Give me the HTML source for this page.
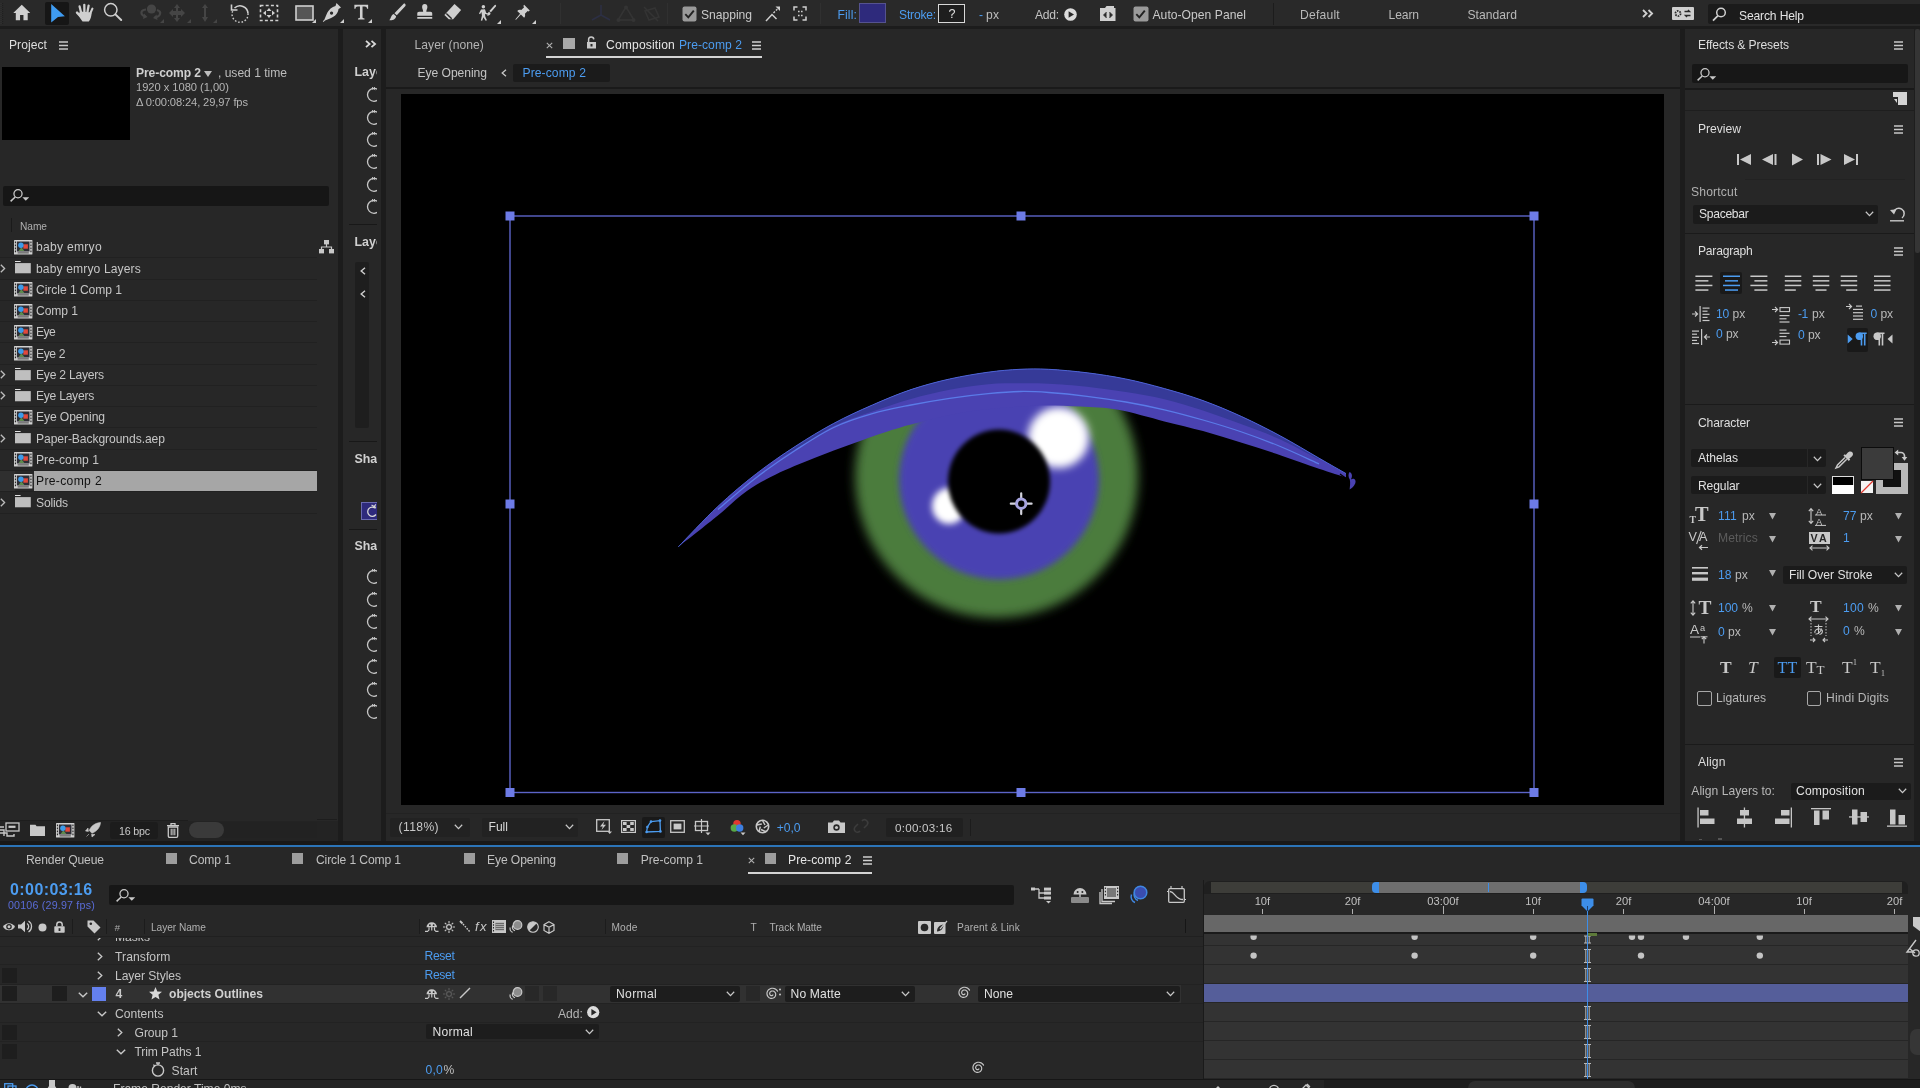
<!DOCTYPE html>
<html><head><meta charset="utf-8"><title>After Effects</title>
<style>
html,body{margin:0;padding:0;}
body{width:1920px;height:1088px;overflow:hidden;background:#1c1c1c;font-family:"Liberation Sans",sans-serif;position:relative;}
#r{position:absolute;left:0;top:0;width:1920px;height:1088px;overflow:hidden;will-change:transform;}
#r div,#r span,#r svg{position:absolute;display:block;white-space:nowrap;}
#r svg{overflow:visible;}
</style></head><body><div id="r">
<div style="left:0px;top:0px;width:1920px;height:25.7px;background:#292929;"></div>
<div style="left:0px;top:25.7px;width:1920px;height:3.5px;background:#1c1c1c;"></div>
<svg style="left:0px;top:3px;" width="3" height="21" viewBox="0 0 3 21"><path d="M1 0 V21" stroke="#343434" stroke-width="1" stroke-dasharray="1 1"/><path d="M2.6 0 V21" stroke="#1e1e1e" stroke-width="1" stroke-dasharray="1 1"/></svg>
<div style="left:45px;top:1.5px;width:24px;height:23.5px;background:#161616;border-radius:2px;"></div>
<svg style="left:11.5px;top:4.4px;" width="19.5" height="17" viewBox="0 0 22 20"><path d="M11 1 L1 10.5 H4 V19 H9 V13 H13 V19 H18 V10.5 H21 Z" fill="#cfcfcf"/></svg>
<svg style="left:0px;top:0px;" width="70" height="28" viewBox="0 0 70 28"><path d="M51.2 4 L64.9 16.3 L58 17 L51.2 22.6 Z" fill="#3f9cf2"/></svg>
<svg style="left:75px;top:2.5px;" width="20" height="20" viewBox="0 0 20 20"><g fill="none" stroke="#cfcfcf" stroke-linecap="round"><path d="M6.2 10 L4.6 3.4" stroke-width="2.3"/><path d="M9.4 9 L9.3 1.8" stroke-width="2.3"/><path d="M12.4 9.4 L13.6 2.6" stroke-width="2.3"/><path d="M15 11 L17.4 5.6" stroke-width="2.1"/><path d="M5.6 13.4 L2 9.6" stroke-width="2.4"/></g><path d="M5 8.5 L16.6 9.5 C16.6 13 15.6 16.4 13.8 18.6 H7.6 C6 16.8 4.6 14.6 3.4 12 Z" fill="#cfcfcf"/></svg>
<svg style="left:102px;top:1px;" width="22" height="22" viewBox="0 0 22 22"><circle cx="8.8" cy="8.8" r="6.2" fill="none" stroke="#cfcfcf" stroke-width="1.5"/><path d="M13.4 13.4 L19.2 19" stroke="#cfcfcf" stroke-width="2" stroke-linecap="round"/></svg>
<svg style="left:138px;top:3px;" width="24" height="20" viewBox="0 0 24 20"><circle cx="13.5" cy="6" r="4.6" fill="#454545"/><path d="M8 6.5 C2 7 2 12 7.5 13.5 M19 7 C24 8.5 23 13.5 16.5 14.5" fill="none" stroke="#454545" stroke-width="2.2"/><path d="M6 10.5 L9.5 14 L5 16Z M18.5 11.5 L15 15 L19.5 17Z" fill="#454545"/></svg>
<svg style="left:168px;top:4.2px;" width="18" height="18" viewBox="0 0 18 18"><path d="M9 0 l3 4 h-2 v3 h3 v-2 l4 4 l-4 4 v-2 h-3 v3 h2 l-3 4 l-3 -4 h2 v-3 h-3 v2 l-4 -4 l4 -4 v2 h3 v-3 h-2z" fill="#454545"/></svg>
<svg style="left:200px;top:4.2px;" width="10" height="18" viewBox="0 0 10 18"><path d="M5 0 l3 4 h-2 v9 h2 l-3 5 l-3 -5 h2 v-9 h-2z" fill="#454545"/></svg>
<svg style="left:160px;top:19.2px;" width="4" height="4" viewBox="0 0 4 4"><path d="M4 0V4H0Z" fill="#454545"/></svg>
<svg style="left:187px;top:19.2px;" width="4" height="4" viewBox="0 0 4 4"><path d="M4 0V4H0Z" fill="#454545"/></svg>
<svg style="left:213px;top:19.2px;" width="4" height="4" viewBox="0 0 4 4"><path d="M4 0V4H0Z" fill="#454545"/></svg>
<svg style="left:230px;top:2.2px;" width="20" height="21" viewBox="0 0 20 21"><path d="M4.5 6 A8 8 0 0 1 18 11.5" fill="none" stroke="#cfcfcf" stroke-width="1.6"/><path d="M18 11.5 A8 8 0 1 1 3 8.5" fill="none" stroke="#cfcfcf" stroke-width="1.4" stroke-dasharray="1.6 1.8"/><path d="M1.5 2.5 V8 H7.5" fill="none" stroke="#cfcfcf" stroke-width="1.6"/></svg>
<svg style="left:259px;top:3.2px;" width="20" height="20" viewBox="0 0 20 20"><rect x="1.5" y="2.5" width="17" height="15" fill="none" stroke="#cfcfcf" stroke-width="1.6" stroke-dasharray="3 2.2"/><path d="M10 5 l2.5 3 h-5z M10 15 l2.5 -3 h-5z M4 10 l3 -2.5 v5z M16 10 l-3 -2.5 v5z" fill="#cfcfcf"/></svg>
<svg style="left:295px;top:4.5px;" width="19" height="17" viewBox="0 0 19 17"><rect x="1" y="1" width="17" height="14" fill="#555" stroke="#cfcfcf" stroke-width="1.6"/></svg>
<svg style="left:312px;top:19.2px;" width="4" height="4" viewBox="0 0 4 4"><path d="M4 0V4H0Z" fill="#cfcfcf"/></svg>
<svg style="left:322px;top:2.2px;" width="20" height="21" viewBox="0 0 20 21"><path d="M14.5 1 L19 5.5 L16.5 7 C16 11 14 14 8 16.5 L3 18.5 L1.5 20 L.8 19.3 L2.3 17.8 L4.5 12.5 C7 7 10 5 13.5 4 Z M9.5 9.5 a1.6 1.6 0 1 0 .1 0z" fill="#cfcfcf" fill-rule="evenodd"/></svg>
<svg style="left:340px;top:19.2px;" width="4" height="4" viewBox="0 0 4 4"><path d="M4 0V4H0Z" fill="#cfcfcf"/></svg>
<svg style="left:352.5px;top:4.4px;" width="16.5" height="15.5" viewBox="0 0 17 18"><path d="M.5 1 H16.5 V5.5 H15.2 C15 3.6 14.3 2.8 12.5 2.8 H10 V15 C10 16.3 10.6 16.6 12.3 16.7 V18 H4.7 V16.7 C6.4 16.6 7 16.3 7 15 V2.8 H4.5 C2.7 2.8 2 3.6 1.8 5.5 H.5 Z" fill="#cfcfcf"/></svg>
<svg style="left:368px;top:19.2px;" width="4" height="4" viewBox="0 0 4 4"><path d="M4 0V4H0Z" fill="#cfcfcf"/></svg>
<svg style="left:387.5px;top:3.0px;" width="18.5" height="18.5" viewBox="0 0 20 21"><path d="M19 1 C20 2 19.5 3 19 3.7 L9.5 14 L6.8 11.5 L17 1.2 C17.7 .5 18.5 .5 19 1 Z M6 12.5 L8.7 15 C8.5 18 5 20 1 19.5 C3 18 2.5 14 6 12.5 Z" fill="#cfcfcf"/></svg>
<svg style="left:415px;top:3.2px;" width="19.5" height="18.5" viewBox="0 0 19 21"><path d="M6.5 4.5 a3 3.5 0 1 1 6 0 c0 2 -1.2 3 -1.2 5.5 H16 c1.3 0 2 .8 2 2 V14.5 H1 V12 c0-1.2 .7-2 2-2 H7.7 C7.7 7.5 6.5 6.5 6.5 4.5 Z M1 16 H18 V18 H1 Z" fill="#cfcfcf"/></svg>
<svg style="left:443px;top:3.2px;" width="19.5" height="18.5" viewBox="0 0 21 21"><path d="M12.5 1 L20 8 L11 18.5 H6 L1 13.5 Z" fill="#cfcfcf"/><path d="M3.2 12 L9.3 17.8" stroke="#292929" stroke-width="1.6"/></svg>
<svg style="left:477.5px;top:3.8px;" width="19.5" height="17.5" viewBox="0 0 23 22"><circle cx="6" cy="3.4" r="2.2" fill="#cfcfcf"/><path d="M3 7 L8 6.5 L9.5 11 L12.5 12 L12 13.5 L8 12.5 L8.5 16 L10.5 20.5 L8.8 21 L6 16.5 L4.5 21 L2.8 20.6 L4.2 14.5 L3.6 10 L1.8 12.8 L.5 12 Z" fill="#cfcfcf"/><path d="M21.5 1.2 C22.4 2 22 3 21.4 3.6 L15.5 10.5 L13.5 8.8 L20 1.6 C20.5 1 21 .8 21.5 1.2 Z M13 9.6 L15 11.3 C15 13.5 13 15 10.5 14.8 C12 13.8 11.2 10.6 13 9.6 Z" fill="#cfcfcf"/></svg>
<svg style="left:497px;top:19.7px;" width="4" height="4" viewBox="0 0 4 4"><path d="M4 0V4H0Z" fill="#cfcfcf"/></svg>
<svg style="left:513.5px;top:3.8px;" width="17" height="17" viewBox="0 0 20 21"><path d="M12 1 L19 8 L17.6 9.2 L16.4 8.6 L13 12 C13.6 14 13.2 15.6 12 17 L8 13 L2 19.5 L1 19 L7 12 L3.5 8.5 C5 7.2 6.5 7 8.5 7.5 L12 4 L11 2.5 Z" fill="#cfcfcf"/></svg>
<svg style="left:532px;top:19.7px;" width="4" height="4" viewBox="0 0 4 4"><path d="M4 0V4H0Z" fill="#cfcfcf"/></svg>
<svg style="left:590px;top:4.2px;" width="22" height="18" viewBox="0 0 22 18"><path d="M11 1 V11 L2 16 M11 11 L20 16" fill="none" stroke="#2c2f44" stroke-width="1.5"/></svg>
<svg style="left:616px;top:5.2px;" width="20" height="18" viewBox="0 0 20 18"><path d="M10 2 L18 15 H2 Z" fill="none" stroke="#343434" stroke-width="1.5"/><circle cx="10" cy="2.5" r="2" fill="#343434"/><circle cx="2.5" cy="15" r="2" fill="#343434"/><circle cx="17.5" cy="15" r="2" fill="#343434"/></svg>
<svg style="left:642px;top:5.2px;" width="20" height="18" viewBox="0 0 20 18"><path d="M3 6 L13 3 L17 12 L7 15 Z M2 2 L16 16" fill="none" stroke="#343434" stroke-width="1.5"/></svg>
<div style="left:560px;top:3px;width:1px;height:21px;background:#303030;"></div>
<div style="left:667px;top:3px;width:1px;height:21px;background:#303030;"></div>
<svg style="left:682px;top:6px;" width="15" height="16" viewBox="0 0 15 16"><rect x=".5" y=".5" width="14" height="15" rx="2" fill="#9a9a9a"/><path d="M3.3 8.2 L6.3 11.4 L11.8 4.6" fill="none" stroke="#222" stroke-width="1.9"/></svg>
<span style="left:701px;top:7.76px;font-size:12.12px;line-height:15px;color:#c9c9c9;letter-spacing:-0.028px;">Snapping</span>
<svg style="left:765px;top:5px;" width="16" height="18" viewBox="0 0 16 18"><path d="M1 16 L7 9.5 L11.5 14" fill="none" stroke="#cfcfcf" stroke-width="1.5"/><path d="M8.5 8 L13 3.5" stroke="#cfcfcf" stroke-width="1.4" stroke-dasharray="2 1.4"/><path d="M10.5 1.5 H15 V6 Z" fill="#cfcfcf"/></svg>
<svg style="left:793px;top:6px;" width="14" height="15" viewBox="0 0 14 15"><path d="M1 4.5 V1 H4.5 M9.5 1 H13 V4.5 M13 10.5 V14 H9.5 M4.5 14 H1 V10.5" fill="none" stroke="#cfcfcf" stroke-width="1.5"/><path d="M5 5.5 h1.6 M8 5.5 h1.6 M5 9.5 h1.6 M8 9.5 h1.6" stroke="#cfcfcf" stroke-width="1.5"/></svg>
<div style="left:820px;top:3px;width:1px;height:21px;background:#303030;"></div>
<span style="left:837.5px;top:7.76px;font-size:12.12px;line-height:15px;color:#4c9cf0;letter-spacing:0.130px;">Fill:</span>
<div style="left:859px;top:3px;width:27px;height:20px;background:#2e2a7c;box-sizing:border-box;border:1px solid #55528f;"></div>
<span style="left:899px;top:7.76px;font-size:12.12px;line-height:15px;color:#4c9cf0;letter-spacing:-0.199px;">Stroke:</span>
<div style="left:938px;top:4px;width:27px;height:19px;background:#1e1e1e;box-sizing:border-box;border:1px solid #d8d8d8;"></div>
<span style="left:948.5px;top:6.95px;font-size:12.61px;line-height:15px;color:#e0e0e0;">?</span>
<span style="left:979px;top:7.76px;font-size:12.12px;line-height:15px;color:#4c9cf0;">-</span>
<span style="left:986px;top:7.76px;font-size:12.12px;line-height:15px;color:#bdbdbd;letter-spacing:0.350px;">px</span>
<span style="left:1035px;top:7.76px;font-size:12.12px;line-height:15px;color:#c4c4c4;letter-spacing:-0.233px;">Add:</span>
<svg style="left:1063.5px;top:7.5px;" width="13" height="13" viewBox="0 0 13 13"><circle cx="6.5" cy="6.5" r="6.3" fill="#dcdcdc"/><path d="M4.6 3.2 L10 6.5 L4.6 9.8 Z" fill="#292929"/></svg>
<svg style="left:1100px;top:5px;" width="16" height="17" viewBox="0 0 16 17"><path d="M0 3 H5 L6.5 1 H14 V3 H15.5 V16 H0 Z" fill="#cfcfcf"/><path d="M6.5 7 L3.5 10 L6.5 13 M9.5 7 L12.5 10 L9.5 13" fill="#292929" stroke="#292929" stroke-width=".8"/></svg>
<svg style="left:1133px;top:6px;" width="16" height="16" viewBox="0 0 16 16"><rect x=".5" y=".5" width="15" height="15" rx="2" fill="#9a9a9a"/><path d="M3.3 8.2 L6.3 11.4 L11.8 4.6" fill="none" stroke="#222" stroke-width="1.9"/></svg>
<span style="left:1152.5px;top:7.76px;font-size:12.12px;line-height:15px;color:#c9c9c9;letter-spacing:0.034px;">Auto-Open Panel</span>
<div style="left:1273px;top:3px;width:1px;height:22px;background:#1c1c1c;"></div>
<span style="left:1300px;top:7.76px;font-size:12.12px;line-height:15px;color:#b9b9b9;letter-spacing:0.228px;">Default</span>
<span style="left:1388.5px;top:7.76px;font-size:12.12px;line-height:15px;color:#b9b9b9;letter-spacing:-0.100px;">Learn</span>
<span style="left:1467.5px;top:7.76px;font-size:12.12px;line-height:15px;color:#b9b9b9;letter-spacing:0.039px;">Standard</span>
<svg style="left:1642px;top:8.5px;" width="12" height="9" viewBox="0 0 12 9"><path d="M1 1 L4.6 4.5 L1 8 M6.5 1 L10.1 4.5 L6.5 8" fill="none" stroke="#cfcfcf" stroke-width="1.8"/></svg>
<svg style="left:1672px;top:7px;" width="22" height="13" viewBox="0 0 22 13"><rect x="0" y="0" width="22" height="13" rx="1" fill="#cfcfcf"/><circle cx="6" cy="6.5" r="2.6" fill="none" stroke="#292929" stroke-width="1.8" stroke-dasharray="1.6 1.1"/><path d="M12.5 4.5 h5 l-1.5 -1.5 M18.5 8.5 h-5 l1.5 1.5" fill="none" stroke="#292929" stroke-width="1.4"/></svg>
<div style="left:1708px;top:4px;width:212px;height:20px;background:#1b1b1b;border-radius:2px 0 0 2px;"></div>
<svg style="left:1712px;top:7px;" width="15" height="15" viewBox="0 0 15 15"><circle cx="9" cy="5.5" r="4.3" fill="none" stroke="#cfcfcf" stroke-width="1.5"/><path d="M6 8.7 L1 13.7" stroke="#cfcfcf" stroke-width="1.7"/></svg>
<span style="left:1739px;top:8.76px;font-size:12.12px;line-height:15px;color:#e2e2e2;letter-spacing:-0.154px;">Search Help</span>
<div style="left:0px;top:29px;width:337.5px;height:812px;background:#272727;"></div>
<span style="left:9px;top:38.26px;font-size:12.12px;line-height:15px;color:#dedede;letter-spacing:0.040px;">Project</span>
<svg style="left:59px;top:40.5px;" width="9" height="9" viewBox="0 0 9 9"><path d="M0 1 H9 M0 4.5 H9 M0 8 H9" stroke="#c8c8c8" stroke-width="1.3"/></svg>
<div style="left:2px;top:67px;width:128px;height:73px;background:#000;"></div>
<span style="left:136px;top:66.26px;font-size:12.12px;line-height:15px;color:#cfcfcf;letter-spacing:-0.101px;font-weight:bold;">Pre-comp 2</span>
<svg style="left:204px;top:70.5px;" width="8" height="6" viewBox="0 0 8 6"><path d="M0 0 H8 L4 6Z" fill="#bdbdbd"/></svg>
<span style="left:218px;top:66.26px;font-size:12.12px;line-height:15px;color:#bdbdbd;letter-spacing:-0.030px;">, used 1 time</span>
<span style="left:136px;top:81.39px;font-size:11.15px;line-height:13px;color:#b4b4b4;letter-spacing:-0.034px;">1920 x 1080 (1,00)</span>
<span style="left:136px;top:95.89px;font-size:11.15px;line-height:13px;color:#b4b4b4;letter-spacing:-0.118px;">Δ 0:00:08:24, 29,97 fps</span>
<div style="left:3px;top:186px;width:326px;height:19.7px;background:#161616;border-radius:2px;"></div>
<svg style="left:10px;top:189px;" width="20" height="13" viewBox="0 0 20 13"><circle cx="8" cy="4.75" r="4.05" fill="none" stroke="#c8c8c8" stroke-width="1.3"/><path d="M5.2 8 L.6 12.4" stroke="#c8c8c8" stroke-width="1.5"/><path d="M12.4 8.2 h6.8 l-3.4 3.5z" fill="#c8c8c8"/></svg>
<div style="left:11px;top:218px;width:1px;height:14px;background:#1a1a1a;"></div>
<span style="left:20px;top:220.51px;font-size:10.19px;line-height:12px;color:#b0b0b0;letter-spacing:-0.045px;">Name</span>
<div style="left:317px;top:236px;width:20px;height:584px;background:#272727;"></div>
<div style="left:0px;top:257px;width:317px;height:1px;background:#212121;"></div>
<svg style="left:14.1px;top:239.6px;" width="18.4" height="14.6" viewBox="0 0 18.4 14.6"><rect x="0" y="0" width="18.4" height="14.6" rx=".6" fill="#d0d0d0"/><rect x="2.9" y="1.5" width="12.6" height="10" fill="#2e2e36"/><path d="M1.45 1.6v1.7M1.45 4.6v1.7M1.45 7.6v1.7M1.45 10.6v1.7M16.95 1.6v1.7M16.95 4.6v1.7M16.95 7.6v1.7M16.95 10.6v1.7" stroke="#2a2a2a" stroke-width="1.2"/><path d="M3.6 12.9 H14.8" stroke="#333" stroke-width=".9"/><path d="M4.6 11 L7.4 7.2 L10.4 11Z" fill="#5f8a4e"/><rect x="9.3" y="4.3" width="4.6" height="4.4" fill="#e2483c"/><circle cx="6.9" cy="5.2" r="2.7" fill="#3d9be9"/></svg>
<span style="left:36px;top:240.26px;font-size:12.12px;line-height:15px;color:#c6c6c6;letter-spacing:0.268px;">baby emryo</span>
<div style="left:0px;top:279px;width:317px;height:1px;background:#212121;"></div>
<svg style="left:15.2px;top:261.4px;" width="16" height="12.4" viewBox="0 0 16 12.4"><rect x="0" y="0" width="5.6" height="1" fill="#e2e2e2"/><rect x="0" y="2.1" width="15.8" height="10.2" fill="#bfbfbf"/></svg>
<svg style="left:0px;top:263.77px;" width="6" height="9" viewBox="0 0 6 9"><path d="M.8 .8 L4.6 4.5 L.8 8.2" fill="none" stroke="#bdbdbd" stroke-width="1.3"/></svg>
<span style="left:36px;top:261.53px;font-size:12.12px;line-height:15px;color:#c6c6c6;letter-spacing:0.114px;">baby emryo Layers</span>
<div style="left:0px;top:300px;width:317px;height:1px;background:#212121;"></div>
<svg style="left:14.1px;top:281.6px;" width="18.4" height="14.6" viewBox="0 0 18.4 14.6"><rect x="0" y="0" width="18.4" height="14.6" rx=".6" fill="#d0d0d0"/><rect x="2.9" y="1.5" width="12.6" height="10" fill="#2e2e36"/><path d="M1.45 1.6v1.7M1.45 4.6v1.7M1.45 7.6v1.7M1.45 10.6v1.7M16.95 1.6v1.7M16.95 4.6v1.7M16.95 7.6v1.7M16.95 10.6v1.7" stroke="#2a2a2a" stroke-width="1.2"/><path d="M3.6 12.9 H14.8" stroke="#333" stroke-width=".9"/><path d="M4.6 11 L7.4 7.2 L10.4 11Z" fill="#5f8a4e"/><rect x="9.3" y="4.3" width="4.6" height="4.4" fill="#e2483c"/><circle cx="6.9" cy="5.2" r="2.7" fill="#3d9be9"/></svg>
<span style="left:36px;top:282.80px;font-size:12.12px;line-height:15px;color:#c6c6c6;letter-spacing:-0.059px;">Circle 1 Comp 1</span>
<div style="left:0px;top:321px;width:317px;height:1px;background:#212121;"></div>
<svg style="left:14.1px;top:303.6px;" width="18.4" height="14.6" viewBox="0 0 18.4 14.6"><rect x="0" y="0" width="18.4" height="14.6" rx=".6" fill="#d0d0d0"/><rect x="2.9" y="1.5" width="12.6" height="10" fill="#2e2e36"/><path d="M1.45 1.6v1.7M1.45 4.6v1.7M1.45 7.6v1.7M1.45 10.6v1.7M16.95 1.6v1.7M16.95 4.6v1.7M16.95 7.6v1.7M16.95 10.6v1.7" stroke="#2a2a2a" stroke-width="1.2"/><path d="M3.6 12.9 H14.8" stroke="#333" stroke-width=".9"/><path d="M4.6 11 L7.4 7.2 L10.4 11Z" fill="#5f8a4e"/><rect x="9.3" y="4.3" width="4.6" height="4.4" fill="#e2483c"/><circle cx="6.9" cy="5.2" r="2.7" fill="#3d9be9"/></svg>
<span style="left:36px;top:304.07px;font-size:12.12px;line-height:15px;color:#c6c6c6;letter-spacing:-0.073px;">Comp 1</span>
<div style="left:0px;top:342px;width:317px;height:1px;background:#212121;"></div>
<svg style="left:14.1px;top:324.6px;" width="18.4" height="14.6" viewBox="0 0 18.4 14.6"><rect x="0" y="0" width="18.4" height="14.6" rx=".6" fill="#d0d0d0"/><rect x="2.9" y="1.5" width="12.6" height="10" fill="#2e2e36"/><path d="M1.45 1.6v1.7M1.45 4.6v1.7M1.45 7.6v1.7M1.45 10.6v1.7M16.95 1.6v1.7M16.95 4.6v1.7M16.95 7.6v1.7M16.95 10.6v1.7" stroke="#2a2a2a" stroke-width="1.2"/><path d="M3.6 12.9 H14.8" stroke="#333" stroke-width=".9"/><path d="M4.6 11 L7.4 7.2 L10.4 11Z" fill="#5f8a4e"/><rect x="9.3" y="4.3" width="4.6" height="4.4" fill="#e2483c"/><circle cx="6.9" cy="5.2" r="2.7" fill="#3d9be9"/></svg>
<span style="left:36px;top:325.34px;font-size:12.12px;line-height:15px;color:#c6c6c6;letter-spacing:-0.628px;">Eye</span>
<div style="left:0px;top:364px;width:317px;height:1px;background:#212121;"></div>
<svg style="left:14.1px;top:345.6px;" width="18.4" height="14.6" viewBox="0 0 18.4 14.6"><rect x="0" y="0" width="18.4" height="14.6" rx=".6" fill="#d0d0d0"/><rect x="2.9" y="1.5" width="12.6" height="10" fill="#2e2e36"/><path d="M1.45 1.6v1.7M1.45 4.6v1.7M1.45 7.6v1.7M1.45 10.6v1.7M16.95 1.6v1.7M16.95 4.6v1.7M16.95 7.6v1.7M16.95 10.6v1.7" stroke="#2a2a2a" stroke-width="1.2"/><path d="M3.6 12.9 H14.8" stroke="#333" stroke-width=".9"/><path d="M4.6 11 L7.4 7.2 L10.4 11Z" fill="#5f8a4e"/><rect x="9.3" y="4.3" width="4.6" height="4.4" fill="#e2483c"/><circle cx="6.9" cy="5.2" r="2.7" fill="#3d9be9"/></svg>
<span style="left:36px;top:346.61px;font-size:12.12px;line-height:15px;color:#c6c6c6;letter-spacing:-0.398px;">Eye 2</span>
<div style="left:0px;top:385px;width:317px;height:1px;background:#212121;"></div>
<svg style="left:15.2px;top:368.4px;" width="16" height="12.4" viewBox="0 0 16 12.4"><rect x="0" y="0" width="5.6" height="1" fill="#e2e2e2"/><rect x="0" y="2.1" width="15.8" height="10.2" fill="#bfbfbf"/></svg>
<svg style="left:0px;top:370.12px;" width="6" height="9" viewBox="0 0 6 9"><path d="M.8 .8 L4.6 4.5 L.8 8.2" fill="none" stroke="#bdbdbd" stroke-width="1.3"/></svg>
<span style="left:36px;top:367.88px;font-size:12.12px;line-height:15px;color:#c6c6c6;letter-spacing:-0.228px;">Eye 2 Layers</span>
<div style="left:0px;top:406px;width:317px;height:1px;background:#212121;"></div>
<svg style="left:15.2px;top:389.4px;" width="16" height="12.4" viewBox="0 0 16 12.4"><rect x="0" y="0" width="5.6" height="1" fill="#e2e2e2"/><rect x="0" y="2.1" width="15.8" height="10.2" fill="#bfbfbf"/></svg>
<svg style="left:0px;top:391.39px;" width="6" height="9" viewBox="0 0 6 9"><path d="M.8 .8 L4.6 4.5 L.8 8.2" fill="none" stroke="#bdbdbd" stroke-width="1.3"/></svg>
<span style="left:36px;top:389.15px;font-size:12.12px;line-height:15px;color:#c6c6c6;letter-spacing:-0.263px;">Eye Layers</span>
<div style="left:0px;top:427px;width:317px;height:1px;background:#212121;"></div>
<svg style="left:14.1px;top:409.6px;" width="18.4" height="14.6" viewBox="0 0 18.4 14.6"><rect x="0" y="0" width="18.4" height="14.6" rx=".6" fill="#d0d0d0"/><rect x="2.9" y="1.5" width="12.6" height="10" fill="#2e2e36"/><path d="M1.45 1.6v1.7M1.45 4.6v1.7M1.45 7.6v1.7M1.45 10.6v1.7M16.95 1.6v1.7M16.95 4.6v1.7M16.95 7.6v1.7M16.95 10.6v1.7" stroke="#2a2a2a" stroke-width="1.2"/><path d="M3.6 12.9 H14.8" stroke="#333" stroke-width=".9"/><path d="M4.6 11 L7.4 7.2 L10.4 11Z" fill="#5f8a4e"/><rect x="9.3" y="4.3" width="4.6" height="4.4" fill="#e2483c"/><circle cx="6.9" cy="5.2" r="2.7" fill="#3d9be9"/></svg>
<span style="left:36px;top:410.42px;font-size:12.12px;line-height:15px;color:#c6c6c6;letter-spacing:-0.098px;">Eye Opening</span>
<div style="left:0px;top:449px;width:317px;height:1px;background:#212121;"></div>
<svg style="left:15.2px;top:431.4px;" width="16" height="12.4" viewBox="0 0 16 12.4"><rect x="0" y="0" width="5.6" height="1" fill="#e2e2e2"/><rect x="0" y="2.1" width="15.8" height="10.2" fill="#bfbfbf"/></svg>
<svg style="left:0px;top:433.93px;" width="6" height="9" viewBox="0 0 6 9"><path d="M.8 .8 L4.6 4.5 L.8 8.2" fill="none" stroke="#bdbdbd" stroke-width="1.3"/></svg>
<span style="left:36px;top:431.69px;font-size:12.12px;line-height:15px;color:#c6c6c6;letter-spacing:-0.081px;">Paper-Backgrounds.aep</span>
<div style="left:0px;top:470px;width:317px;height:1px;background:#212121;"></div>
<svg style="left:14.1px;top:451.6px;" width="18.4" height="14.6" viewBox="0 0 18.4 14.6"><rect x="0" y="0" width="18.4" height="14.6" rx=".6" fill="#d0d0d0"/><rect x="2.9" y="1.5" width="12.6" height="10" fill="#2e2e36"/><path d="M1.45 1.6v1.7M1.45 4.6v1.7M1.45 7.6v1.7M1.45 10.6v1.7M16.95 1.6v1.7M16.95 4.6v1.7M16.95 7.6v1.7M16.95 10.6v1.7" stroke="#2a2a2a" stroke-width="1.2"/><path d="M3.6 12.9 H14.8" stroke="#333" stroke-width=".9"/><path d="M4.6 11 L7.4 7.2 L10.4 11Z" fill="#5f8a4e"/><rect x="9.3" y="4.3" width="4.6" height="4.4" fill="#e2483c"/><circle cx="6.9" cy="5.2" r="2.7" fill="#3d9be9"/></svg>
<span style="left:36px;top:452.96px;font-size:12.12px;line-height:15px;color:#c6c6c6;letter-spacing:0.036px;">Pre-comp 1</span>
<div style="left:0px;top:491px;width:317px;height:1px;background:#212121;"></div>
<div style="left:0px;top:471px;width:15px;height:20px;background:#2f2f2f;"></div>
<div style="left:34px;top:471px;width:283px;height:20px;background:#a6a6a6;"></div>
<svg style="left:14.1px;top:473.6px;" width="18.4" height="14.6" viewBox="0 0 18.4 14.6"><rect x="0" y="0" width="18.4" height="14.6" rx=".6" fill="#d0d0d0"/><rect x="2.9" y="1.5" width="12.6" height="10" fill="#2e2e36"/><path d="M1.45 1.6v1.7M1.45 4.6v1.7M1.45 7.6v1.7M1.45 10.6v1.7M16.95 1.6v1.7M16.95 4.6v1.7M16.95 7.6v1.7M16.95 10.6v1.7" stroke="#2a2a2a" stroke-width="1.2"/><path d="M3.6 12.9 H14.8" stroke="#333" stroke-width=".9"/><path d="M4.6 11 L7.4 7.2 L10.4 11Z" fill="#5f8a4e"/><rect x="9.3" y="4.3" width="4.6" height="4.4" fill="#e2483c"/><circle cx="6.9" cy="5.2" r="2.7" fill="#3d9be9"/></svg>
<span style="left:36px;top:474.23px;font-size:12.12px;line-height:15px;color:#111;letter-spacing:0.336px;">Pre-comp 2</span>
<div style="left:0px;top:513px;width:317px;height:1px;background:#212121;"></div>
<svg style="left:15.2px;top:495.4px;" width="16" height="12.4" viewBox="0 0 16 12.4"><rect x="0" y="0" width="5.6" height="1" fill="#e2e2e2"/><rect x="0" y="2.1" width="15.8" height="10.2" fill="#bfbfbf"/></svg>
<svg style="left:0px;top:497.74px;" width="6" height="9" viewBox="0 0 6 9"><path d="M.8 .8 L4.6 4.5 L.8 8.2" fill="none" stroke="#bdbdbd" stroke-width="1.3"/></svg>
<span style="left:36px;top:495.50px;font-size:12.12px;line-height:15px;color:#c6c6c6;letter-spacing:-0.168px;">Solids</span>
<svg style="left:319px;top:240px;" width="15" height="14" viewBox="0 0 15 14"><rect x="5" y="0" width="5" height="4.4" fill="#c8c8c8"/><rect x="0" y="9" width="5" height="4.4" fill="#c8c8c8"/><rect x="10" y="9" width="5" height="4.4" fill="#c8c8c8"/><path d="M7.5 4 V7 M2.5 9 V7 H12.5 V9" fill="none" stroke="#c8c8c8" stroke-width="1.2"/></svg>
<div style="left:0px;top:821px;width:338px;height:20px;background:#232323;"></div>
<svg style="left:0px;top:822px;" width="19" height="16" viewBox="0 0 19 16"><rect x="6" y="1" width="13" height="8" fill="none" stroke="#c8c8c8" stroke-width="1.3"/><rect x="8.5" y="3.7" width="7" height="2.2" fill="#c8c8c8"/><path d="M0 5 h4 M0 8 h4 v6 M0 11 h7 v3 h7 v-2" fill="none" stroke="#c8c8c8" stroke-width="1.4"/></svg>
<svg style="left:30px;top:823.5px;" width="15" height="12" viewBox="0 0 15 12"><path d="M0 .8 H5.5 L6.6 2.2 H15 V12 H0 Z" fill="#c8c8c8"/></svg>
<svg style="left:55.6px;top:822.6px;" width="18.4" height="14.6" viewBox="0 0 18.4 14.6"><rect x="0" y="0" width="18.4" height="14.6" rx=".6" fill="#d0d0d0"/><rect x="2.9" y="1.5" width="12.6" height="10" fill="#2e2e36"/><path d="M1.45 1.6v1.7M1.45 4.6v1.7M1.45 7.6v1.7M1.45 10.6v1.7M16.95 1.6v1.7M16.95 4.6v1.7M16.95 7.6v1.7M16.95 10.6v1.7" stroke="#2a2a2a" stroke-width="1.2"/><path d="M3.6 12.9 H14.8" stroke="#333" stroke-width=".9"/><path d="M4.6 11 L7.4 7.2 L10.4 11Z" fill="#5f8a4e"/><rect x="9.3" y="4.3" width="4.6" height="4.4" fill="#e2483c"/><circle cx="6.9" cy="5.2" r="2.7" fill="#3d9be9"/></svg>
<svg style="left:85px;top:822px;" width="16" height="15" viewBox="0 0 16 15"><path d="M15.5 .5 C10 1 6 4 4.2 8.5 L7 11.2 C11.5 9.5 15 6 15.5 .5 Z M3.4 9.4 L.5 9 L3 6 Z M6.6 12.2 L7 15 L10 12.5Z M4 12 L1.5 14.5" fill="#c8c8c8" stroke="#c8c8c8" stroke-width=".6"/></svg>
<div style="left:110px;top:822px;width:48px;height:17px;background:#1c1c1c;border-radius:3px;"></div>
<span style="left:119px;top:824.70px;font-size:10.67px;line-height:13px;color:#c8c8c8;letter-spacing:-0.172px;">16 bpc</span>
<svg style="left:167px;top:822.5px;" width="12" height="15" viewBox="0 0 12 15"><path d="M0 2.6 H12 M4 2.4 V.7 H8 V2.4" fill="none" stroke="#c8c8c8" stroke-width="1.3"/><path d="M1.3 4 H10.7 V13 Q10.7 14.3 9.4 14.3 H2.6 Q1.3 14.3 1.3 13 Z" fill="none" stroke="#c8c8c8" stroke-width="1.3"/><path d="M4.2 5.8 V12.2 M6 5.8 V12.2 M7.8 5.8 V12.2" stroke="#c8c8c8" stroke-width="1.1"/></svg>
<div style="left:188px;top:822px;width:129px;height:16px;background:#222222;border-radius:8px 0 0 8px;"></div>
<div style="left:189px;top:822px;width:35px;height:16px;background:#3a3a3a;border-radius:8px;"></div>
<div style="left:0px;top:820px;width:188px;height:1px;background:#1d1d1d;"></div>
<div style="left:317px;top:819px;width:20px;height:1px;background:#1d1d1d;"></div>
<div style="left:342.5px;top:29px;width:38.5px;height:812px;background:#272727;"></div>
<svg style="left:365px;top:40px;" width="12" height="9" viewBox="0 0 12 9"><path d="M1 .8 L4.6 4 L1 7.2 M6.5 .8 L10.1 4 L6.5 7.2" fill="none" stroke="#d8d8d8" stroke-width="1.8"/></svg>
<div style="left:343px;top:30px;width:33.6px;height:811px;overflow:hidden;">
<span style="left:11.5px;top:35.47px;font-size:12.42px;line-height:15px;color:#d0d0d0;font-weight:bold;">Laye</span>
<span style="left:11.5px;top:205.47px;font-size:12.42px;line-height:15px;color:#d0d0d0;font-weight:bold;">Laye</span>
<span style="left:11.5px;top:422.47px;font-size:12.42px;line-height:15px;color:#d0d0d0;font-weight:bold;">Shap</span>
<span style="left:11.5px;top:509.47px;font-size:12.42px;line-height:15px;color:#d0d0d0;font-weight:bold;">Shap</span>
<svg style="left:24.30000000000001px;top:56.8px;" width="14" height="15" viewBox="0 0 14 15"><circle cx="7" cy="7.8" r="6.5" fill="none" stroke="#c8c8c8" stroke-width="1.3"/><path d="M5 .2 L8.2 2.8 M8 0 L5.6 2.8" stroke="#c8c8c8" stroke-width="1"/></svg>
<svg style="left:24.30000000000001px;top:79.8px;" width="14" height="15" viewBox="0 0 14 15"><circle cx="7" cy="7.8" r="6.5" fill="none" stroke="#c8c8c8" stroke-width="1.3"/><path d="M5 .2 L8.2 2.8 M8 0 L5.6 2.8" stroke="#c8c8c8" stroke-width="1"/></svg>
<svg style="left:24.30000000000001px;top:101.8px;" width="14" height="15" viewBox="0 0 14 15"><circle cx="7" cy="7.8" r="6.5" fill="none" stroke="#c8c8c8" stroke-width="1.3"/><path d="M5 .2 L8.2 2.8 M8 0 L5.6 2.8" stroke="#c8c8c8" stroke-width="1"/></svg>
<svg style="left:24.30000000000001px;top:123.8px;" width="14" height="15" viewBox="0 0 14 15"><circle cx="7" cy="7.8" r="6.5" fill="none" stroke="#c8c8c8" stroke-width="1.3"/><path d="M5 .2 L8.2 2.8 M8 0 L5.6 2.8" stroke="#c8c8c8" stroke-width="1"/></svg>
<svg style="left:24.30000000000001px;top:146.8px;" width="14" height="15" viewBox="0 0 14 15"><circle cx="7" cy="7.8" r="6.5" fill="none" stroke="#c8c8c8" stroke-width="1.3"/><path d="M5 .2 L8.2 2.8 M8 0 L5.6 2.8" stroke="#c8c8c8" stroke-width="1"/></svg>
<svg style="left:24.30000000000001px;top:168.8px;" width="14" height="15" viewBox="0 0 14 15"><circle cx="7" cy="7.8" r="6.5" fill="none" stroke="#c8c8c8" stroke-width="1.3"/><path d="M5 .2 L8.2 2.8 M8 0 L5.6 2.8" stroke="#c8c8c8" stroke-width="1"/></svg>
<svg style="left:24.30000000000001px;top:539.4px;" width="14" height="15" viewBox="0 0 14 15"><circle cx="7" cy="7.8" r="6.5" fill="none" stroke="#c8c8c8" stroke-width="1.3"/><path d="M5 .2 L8.2 2.8 M8 0 L5.6 2.8" stroke="#c8c8c8" stroke-width="1"/></svg>
<svg style="left:24.30000000000001px;top:561.5999999999999px;" width="14" height="15" viewBox="0 0 14 15"><circle cx="7" cy="7.8" r="6.5" fill="none" stroke="#c8c8c8" stroke-width="1.3"/><path d="M5 .2 L8.2 2.8 M8 0 L5.6 2.8" stroke="#c8c8c8" stroke-width="1"/></svg>
<svg style="left:24.30000000000001px;top:584.4px;" width="14" height="15" viewBox="0 0 14 15"><circle cx="7" cy="7.8" r="6.5" fill="none" stroke="#c8c8c8" stroke-width="1.3"/><path d="M5 .2 L8.2 2.8 M8 0 L5.6 2.8" stroke="#c8c8c8" stroke-width="1"/></svg>
<svg style="left:24.30000000000001px;top:606.8px;" width="14" height="15" viewBox="0 0 14 15"><circle cx="7" cy="7.8" r="6.5" fill="none" stroke="#c8c8c8" stroke-width="1.3"/><path d="M5 .2 L8.2 2.8 M8 0 L5.6 2.8" stroke="#c8c8c8" stroke-width="1"/></svg>
<svg style="left:24.30000000000001px;top:629.3px;" width="14" height="15" viewBox="0 0 14 15"><circle cx="7" cy="7.8" r="6.5" fill="none" stroke="#c8c8c8" stroke-width="1.3"/><path d="M5 .2 L8.2 2.8 M8 0 L5.6 2.8" stroke="#c8c8c8" stroke-width="1"/></svg>
<svg style="left:24.30000000000001px;top:651.8px;" width="14" height="15" viewBox="0 0 14 15"><circle cx="7" cy="7.8" r="6.5" fill="none" stroke="#c8c8c8" stroke-width="1.3"/><path d="M5 .2 L8.2 2.8 M8 0 L5.6 2.8" stroke="#c8c8c8" stroke-width="1"/></svg>
<svg style="left:24.30000000000001px;top:674.4px;" width="14" height="15" viewBox="0 0 14 15"><circle cx="7" cy="7.8" r="6.5" fill="none" stroke="#c8c8c8" stroke-width="1.3"/><path d="M5 .2 L8.2 2.8 M8 0 L5.6 2.8" stroke="#c8c8c8" stroke-width="1"/></svg>
</div>
<div style="left:349px;top:224px;width:28px;height:1px;background:#181818;"></div>
<div style="left:349px;top:441px;width:28px;height:1px;background:#181818;"></div>
<div style="left:349px;top:529px;width:28px;height:1px;background:#181818;"></div>
<div style="left:355px;top:262px;width:14px;height:166px;background:#1e1e1e;border-radius:2px;"></div>
<svg style="left:360px;top:267.4px;" width="6" height="8" viewBox="0 0 6 8"><path d="M5 .8 L1.2 4 L5 7.2" fill="none" stroke="#d0d0d0" stroke-width="1.4"/></svg>
<svg style="left:360px;top:290px;" width="6" height="8" viewBox="0 0 6 8"><path d="M5 .8 L1.2 4 L5 7.2" fill="none" stroke="#d0d0d0" stroke-width="1.4"/></svg>
<div style="left:361px;top:501.5px;width:16px;height:18px;background:#2e2a7c;box-sizing:border-box;border:1px solid #6a6ab0;border-right:none;"></div>
<svg style="left:366px;top:504px;" width="11" height="13" viewBox="0 0 11 13"><path d="M9.5 4.4 A4.6 4.6 0 1 0 10 10.5" fill="none" stroke="#d8d8d8" stroke-width="1.25"/><path d="M5.5 1 L10 3.6 M7.2 4 L9.8 .4" stroke="#d8d8d8" stroke-width="1.1"/></svg>
<div style="left:385.7px;top:29px;width:1294.3px;height:812px;background:#272727;"></div>
<div style="left:385.7px;top:87px;width:1294.3px;height:2px;background:#1a1a1a;"></div>
<span style="left:414.5px;top:38.26px;font-size:12.12px;line-height:15px;color:#b4b4b4;letter-spacing:0.065px;">Layer (none)</span>
<svg style="left:546px;top:42px;" width="7" height="7" viewBox="0 0 7 7"><path d="M.8 .8 L6.2 6.2 M6.2 .8 L.8 6.2" stroke="#b0b0b0" stroke-width="1.1"/></svg>
<div style="left:563px;top:38px;width:12px;height:11px;background:#a9a9a9;"></div>
<svg style="left:586px;top:36px;" width="11" height="13" viewBox="0 0 11 13"><path d="M2.6 6 V3.6 A2.6 2.6 0 0 1 7.8 3.4" fill="none" stroke="#c8c8c8" stroke-width="1.5"/><rect x="1" y="6" width="9" height="6.5" fill="#c8c8c8"/><rect x="4.5" y="8" width="2" height="2.5" fill="#262626"/></svg>
<span style="left:606px;top:38.26px;font-size:12.12px;line-height:15px;color:#e6e6e6;letter-spacing:0.149px;">Composition</span>
<span style="left:679px;top:38.26px;font-size:12.12px;line-height:15px;color:#4c9cf0;letter-spacing:0.036px;">Pre-comp 2</span>
<svg style="left:752px;top:40.5px;" width="9" height="9" viewBox="0 0 9 9"><path d="M0 1 H9 M0 4.5 H9 M0 8 H9" stroke="#d0d0d0" stroke-width="1.3"/></svg>
<div style="left:546px;top:56px;width:216px;height:2px;background:#d4d4d4;"></div>
<span style="left:417.5px;top:66.26px;font-size:12.12px;line-height:15px;color:#c4c4c4;letter-spacing:-0.052px;">Eye Opening</span>
<svg style="left:501px;top:69px;" width="6" height="8" viewBox="0 0 6 8"><path d="M5 .8 L1.2 4 L5 7.2" fill="none" stroke="#c8c8c8" stroke-width="1.3"/></svg>
<div style="left:513px;top:64px;width:97px;height:18px;background:#1b1b1b;border-radius:2px;"></div>
<span style="left:522.5px;top:66.26px;font-size:12.12px;line-height:15px;color:#4c9cf0;letter-spacing:0.086px;">Pre-comp 2</span>
<div style="left:401px;top:94px;width:1263px;height:711px;background:#000;"></div>
<svg style="left:0px;top:0px;" width="1920" height="1088" viewBox="0 0 1920 1088"><defs><filter id="b6" x="-20%" y="-20%" width="140%" height="140%"><feGaussianBlur stdDeviation="5.5"/></filter>
<filter id="b3" x="-20%" y="-20%" width="140%" height="140%"><feGaussianBlur stdDeviation="3.4"/></filter>
<filter id="b2" x="-20%" y="-20%" width="140%" height="140%"><feGaussianBlur stdDeviation="2"/></filter>
<filter id="b4" x="-30%" y="-30%" width="160%" height="160%"><feGaussianBlur stdDeviation="3"/></filter>
<filter id="b5" x="-30%" y="-30%" width="160%" height="160%"><feGaussianBlur stdDeviation="4"/></filter>
<clipPath id="vclip"><rect x="401" y="94" width="1263" height="711"/></clipPath>
<clipPath id="below"><path d="M678.3 546.9C684.9 540.1 704.9 518.6 717.9 506.4C730.9 494.2 743.6 483.6 756.5 473.6C769.4 463.6 782.2 454.9 795.1 446.5C808.0 438.1 820.8 430.3 833.7 423.4C846.6 416.5 859.5 410.6 872.4 405.0C885.3 399.4 898.1 393.9 911.0 389.6C923.9 385.3 936.7 381.9 949.6 379.0C962.5 376.1 976.5 373.8 988.2 372.2C999.9 370.6 1009.9 369.8 1020.0 369.3C1030.1 368.8 1037.4 368.7 1048.6 369.3C1059.8 369.9 1074.3 371.2 1087.2 372.8C1100.1 374.4 1112.9 376.4 1125.8 379.0C1138.7 381.6 1151.5 385.0 1164.4 388.6C1177.3 392.2 1190.1 395.9 1203.0 400.6C1215.9 405.3 1228.8 410.7 1241.7 416.6C1254.6 422.5 1267.4 429.0 1280.3 435.9C1293.2 442.8 1308.0 451.8 1318.9 458.1C1329.9 464.4 1341.5 471.0 1346.0 473.6L1346 900L678 900Z"/></clipPath></defs>
<g clip-path="url(#vclip)">
<g clip-path="url(#below)">
<circle cx="996.5" cy="476.5" r="141.5" fill="#4c7b3c" filter="url(#b6)"/>
<circle cx="999" cy="479.5" r="100" fill="#4a42b2" filter="url(#b3)"/>
<circle cx="1058.5" cy="437.5" r="30.5" fill="#fff" filter="url(#b5)"/>
<ellipse cx="949" cy="506" rx="17" ry="18" fill="#fff" filter="url(#b4)"/>
<ellipse cx="999" cy="481.5" rx="51" ry="52" fill="#000" filter="url(#b2)"/>
</g>
<path d="M678.3 546.9C684.9 540.1 704.9 518.6 717.9 506.4C730.9 494.2 743.6 483.6 756.5 473.6C769.4 463.6 782.2 454.9 795.1 446.5C808.0 438.1 820.8 430.3 833.7 423.4C846.6 416.5 859.5 410.6 872.4 405.0C885.3 399.4 898.1 393.9 911.0 389.6C923.9 385.3 936.7 381.9 949.6 379.0C962.5 376.1 976.5 373.8 988.2 372.2C999.9 370.6 1009.9 369.8 1020.0 369.3C1030.1 368.8 1037.4 368.7 1048.6 369.3C1059.8 369.9 1074.3 371.2 1087.2 372.8C1100.1 374.4 1112.9 376.4 1125.8 379.0C1138.7 381.6 1151.5 385.0 1164.4 388.6C1177.3 392.2 1190.1 395.9 1203.0 400.6C1215.9 405.3 1228.8 410.7 1241.7 416.6C1254.6 422.5 1267.4 429.0 1280.3 435.9C1293.2 442.8 1308.0 451.8 1318.9 458.1C1329.9 464.4 1341.5 471.0 1346.0 473.6L1346.0 477.4C1341.5 475.9 1329.9 472.4 1318.9 468.7C1308.0 465.0 1293.2 459.5 1280.3 455.2C1267.4 450.9 1254.6 446.7 1241.7 442.7C1228.8 438.7 1215.9 434.7 1203.0 431.1C1190.1 427.6 1178.6 424.9 1164.4 421.4C1150.2 417.8 1132.1 412.3 1118.0 409.8C1103.9 407.3 1093.0 407.2 1080.0 406.5C1067.0 405.8 1053.3 405.2 1040.0 405.5C1026.7 405.8 1013.3 406.8 1000.0 408.0C986.7 409.2 973.5 410.6 960.0 413.0C946.5 415.4 930.1 419.5 918.7 422.4C907.3 425.2 902.6 426.6 891.7 430.1C880.8 433.6 866.0 438.9 853.1 443.6C840.2 448.3 827.3 453.0 814.4 458.1C801.5 463.2 787.0 469.0 775.8 474.5C764.5 480.0 756.5 484.2 746.9 491.0C737.2 497.8 729.3 506.2 717.9 515.5C706.5 524.8 684.9 541.7 678.3 546.9Z" fill="#4a42b2"/>
<path d="M780.0 456.5C782.5 454.8 786.1 452.0 795.1 446.5C804.1 441.0 820.8 430.3 833.7 423.4C846.6 416.5 859.5 410.6 872.4 405.0C885.3 399.4 898.1 393.9 911.0 389.6C923.9 385.3 936.7 381.9 949.6 379.0C962.5 376.1 976.5 373.8 988.2 372.2C999.9 370.6 1009.9 369.8 1020.0 369.3C1030.1 368.8 1037.4 368.7 1048.6 369.3C1059.8 369.9 1074.3 371.2 1087.2 372.8C1100.1 374.4 1112.9 376.4 1125.8 379.0C1138.7 381.6 1151.5 385.0 1164.4 388.6C1177.3 392.2 1190.1 395.9 1203.0 400.6C1215.9 405.3 1228.8 410.7 1241.7 416.6C1254.6 422.5 1267.4 429.0 1280.3 435.9C1293.2 442.8 1312.5 454.4 1318.9 458.1L1318.9 459.5C1312.5 456.2 1293.2 445.4 1280.3 439.5C1267.4 433.6 1254.6 429.1 1241.7 424.3C1228.8 419.5 1215.9 414.7 1203.0 410.5C1190.1 406.3 1177.3 402.3 1164.4 399.2C1151.5 396.1 1138.7 394.1 1125.8 392.0C1112.9 389.9 1099.9 388.1 1087.0 386.7C1074.1 385.3 1059.8 384.4 1048.6 383.8C1037.4 383.2 1030.1 383.2 1020.0 383.3C1009.9 383.4 999.9 383.1 988.2 384.2C976.5 385.3 962.5 387.3 949.6 389.8C936.7 392.3 923.9 395.4 911.0 399.0C898.1 402.6 885.3 407.0 872.4 411.5C859.5 416.0 845.8 420.2 833.7 426.0C821.6 431.8 809.0 441.2 800.0 446.5C791.0 451.8 783.3 456.1 780.0 458.0Z" fill="#363a98"/>
<path d="M717.9 509.5C724.3 504.1 743.6 487.2 756.5 477.4C769.4 467.6 782.2 458.8 795.1 450.5C808.0 442.2 820.8 433.6 833.7 427.5C846.6 421.4 859.5 417.4 872.4 413.7C885.3 409.9 898.1 407.6 911.0 405.0C923.9 402.4 936.7 400.2 949.6 398.3C962.5 396.4 976.5 394.7 988.2 393.6C999.9 392.5 1009.9 391.7 1020.0 391.5C1030.1 391.3 1037.4 391.7 1048.6 392.5C1059.8 393.3 1074.1 394.7 1087.0 396.3C1099.9 397.9 1112.9 399.8 1125.8 402.0C1138.7 404.2 1151.5 406.8 1164.4 409.8C1177.3 412.8 1190.1 416.3 1203.0 420.0C1215.9 423.7 1228.8 427.6 1241.7 432.0C1254.6 436.4 1267.4 441.2 1280.3 446.5C1293.2 451.8 1312.5 461.0 1319.0 463.9" fill="none" stroke="#5a7be8" stroke-width="1.3"/>
<path d="M678.3 546.9C684.9 540.1 704.9 518.6 717.9 506.4C730.9 494.2 743.6 483.6 756.5 473.6C769.4 463.6 782.2 454.9 795.1 446.5C808.0 438.1 820.8 430.3 833.7 423.4C846.6 416.5 859.5 410.6 872.4 405.0C885.3 399.4 898.1 393.9 911.0 389.6C923.9 385.3 936.7 381.9 949.6 379.0C962.5 376.1 976.5 373.8 988.2 372.2C999.9 370.6 1009.9 369.8 1020.0 369.3C1030.1 368.8 1037.4 368.7 1048.6 369.3C1059.8 369.9 1074.3 371.2 1087.2 372.8C1100.1 374.4 1112.9 376.4 1125.8 379.0C1138.7 381.6 1151.5 385.0 1164.4 388.6C1177.3 392.2 1190.1 395.9 1203.0 400.6C1215.9 405.3 1228.8 410.7 1241.7 416.6C1254.6 422.5 1267.4 429.0 1280.3 435.9C1293.2 442.8 1308.0 451.8 1318.9 458.1C1329.9 464.4 1341.5 471.0 1346.0 473.6" fill="none" stroke="#4c62d4" stroke-width="1"/>
<path d="M1349.5 472 C1352.5 473 1352.6 477 1350.8 479.5 C1354.5 477.5 1356.5 480.5 1355.2 483.5 C1354 486.5 1351.6 488.5 1349.6 489.5 C1350 486 1350.5 483 1349.8 479.5 C1348.3 477.5 1348 474 1349.5 472Z" fill="#4a42b2"/>
<path d="M1340 474 L1347 479" stroke="#000" stroke-width="1.2"/>
</g>
<!-- selection box -->
<rect x="510" y="216" width="1024" height="576.5" fill="none" stroke="#5c64c8" stroke-width="1.4"/>
<rect x="505.5" y="211.5" width="9" height="9" fill="#6d7be6"/><rect x="505.5" y="499.5" width="9" height="9" fill="#6d7be6"/><rect x="505.5" y="788.0" width="9" height="9" fill="#6d7be6"/><rect x="1016.5" y="211.5" width="9" height="9" fill="#6d7be6"/><rect x="1016.5" y="788.0" width="9" height="9" fill="#6d7be6"/><rect x="1529.5" y="211.5" width="9" height="9" fill="#6d7be6"/><rect x="1529.5" y="499.5" width="9" height="9" fill="#6d7be6"/><rect x="1529.5" y="788.0" width="9" height="9" fill="#6d7be6"/><g transform="translate(1021.2,503.7)" fill="none"><path d="M0 -10.4 V-5 M0 10.4 V5 M-10.4 0 H-5 M10.4 0 H5" stroke="#d2d2dc" stroke-width="2.2" stroke-linecap="round"/><circle r="4.7" stroke="#a6a3de" stroke-width="3"/></g></svg>
<div style="left:385.7px;top:812.5px;width:1294.3px;height:1px;background:#222222;"></div>
<div style="left:390px;top:818px;width:80px;height:19px;background:#222222;border-radius:2px;"></div>
<span style="left:398.5px;top:820.46px;font-size:12.12px;line-height:15px;color:#c8c8c8;letter-spacing:0.388px;">(118%)</span>
<svg style="left:453.5px;top:824.2px;" width="9" height="6" viewBox="0 0 9 6"><path d="M.8 .8 L4.5 4.6 L8.2 .8" fill="none" stroke="#c8c8c8" stroke-width="1.25"/></svg>
<div style="left:482px;top:818px;width:96px;height:19px;background:#222222;border-radius:2px;"></div>
<span style="left:488.5px;top:820.46px;font-size:12.12px;line-height:15px;color:#d8d8d8;letter-spacing:-0.007px;">Full</span>
<svg style="left:564.5px;top:824.2px;" width="9" height="6" viewBox="0 0 9 6"><path d="M.8 .8 L4.5 4.6 L8.2 .8" fill="none" stroke="#c8c8c8" stroke-width="1.25"/></svg>
<svg style="left:596px;top:819.4px;" width="16" height="15" viewBox="0 0 16 15"><rect x=".7" y=".7" width="12.6" height="11.6" fill="none" stroke="#c8c8c8" stroke-width="1.3"/><path d="M8.5 2 L4 7.5 H6.8 L5.5 11 L10 5.8 H7.2Z" fill="#c8c8c8"/><path d="M11.5 12.5 h4.5 l-2.25 2.5z" fill="#c8c8c8"/></svg>
<svg style="left:620.5px;top:820.4px;" width="15" height="13" viewBox="0 0 15 13"><rect x=".6" y=".6" width="13.8" height="11.8" fill="none" stroke="#c8c8c8" stroke-width="1.2"/><path d="M2 2h3.6v3h-3.6zM9.2 2h3.6v3h-3.6zM5.6 5h3.6v3h-3.6zM2 8h3.6v3h-3.6zM9.2 8h3.6v3h-3.6z" fill="#c8c8c8"/></svg>
<div style="left:642px;top:816.5px;width:23px;height:21px;background:#191919;border-radius:2px;"></div>
<svg style="left:645px;top:819.4px;" width="17" height="15" viewBox="0 0 17 15"><path d="M6 2.6 L15 1.6 L15.4 12.4 L1.6 13 L2.4 8 Z" fill="none" stroke="#4c9cf0" stroke-width="1.3"/><circle cx="6" cy="2.6" r="1.3" fill="#4c9cf0"/><circle cx="15" cy="1.6" r="1.3" fill="#4c9cf0"/><circle cx="15.4" cy="12.4" r="1.3" fill="#4c9cf0"/><circle cx="1.6" cy="13" r="1.3" fill="#4c9cf0"/><circle cx="2.4" cy="8" r="1.3" fill="#4c9cf0"/></svg>
<svg style="left:670px;top:820.4px;" width="15" height="13" viewBox="0 0 15 13"><rect x=".7" y=".7" width="13.6" height="11.6" fill="none" stroke="#c8c8c8" stroke-width="1.3"/><rect x="3.6" y="3.6" width="7.8" height="5.8" fill="#c8c8c8"/></svg>
<svg style="left:694px;top:819px;" width="17" height="17" viewBox="0 0 17 17"><rect x="1.5" y="2.5" width="12" height="9" fill="none" stroke="#c8c8c8" stroke-width="1.3"/><path d="M7.5 0 V14 M0 7 H15" stroke="#c8c8c8" stroke-width="1.2"/><path d="M11.5 13.5 h5 l-2.5 2.8z" fill="#c8c8c8"/></svg>
<svg style="left:730px;top:819px;" width="16" height="17" viewBox="0 0 16 17"><circle cx="7" cy="4.6" r="3.7" fill="#e0392f"/><circle cx="4.3" cy="9" r="3.7" fill="#58a846"/><circle cx="9.7" cy="9" r="3.7" fill="#3d7fe0"/><path d="M10.5 13.5 h5 l-2.5 2.8z" fill="#c8c8c8"/></svg>
<svg style="left:755px;top:819.4px;" width="15" height="15" viewBox="0 0 15 15"><circle cx="7.5" cy="7.5" r="6.2" fill="none" stroke="#c8c8c8" stroke-width="1.6"/><path d="M7.5 1.5 L10 6 M13.3 6 L8.8 9 M11 12.7 L6 10.5 M4 12.7 L5.3 7.6 M1.7 6 L6.8 5" stroke="#c8c8c8" stroke-width="1.5"/></svg>
<span style="left:776.7px;top:820.96px;font-size:12.12px;line-height:15px;color:#4c9cf0;letter-spacing:-0.032px;">+0,0</span>
<svg style="left:828px;top:820.3px;" width="17" height="13" viewBox="0 0 17 13"><path d="M0 2.5 H4.5 L6 0.5 H11 L12.5 2.5 H17 V13 H0Z" fill="#c8c8c8"/><circle cx="8.5" cy="7.5" r="3.2" fill="#272727"/><circle cx="8.5" cy="7.5" r="1.6" fill="#c8c8c8"/></svg>
<svg style="left:853px;top:819.4px;" width="16" height="14" viewBox="0 0 16 14"><path d="M9 2 a3.2 3.2 0 0 1 5 4 l-3 3 M7 12 a3.2 3.2 0 0 1 -5 -4 l3 -3" fill="none" stroke="#3c3c3c" stroke-width="1.6"/></svg>
<div style="left:885.5px;top:818px;width:77px;height:19px;background:#202020;border-radius:2px;"></div>
<span style="left:895px;top:820.77px;font-size:11.64px;line-height:14px;color:#c8c8c8;letter-spacing:0.248px;">0:00:03:16</span>
<div style="left:970px;top:819px;width:1px;height:17px;background:#1c1c1c;"></div>
<div style="left:1685px;top:29px;width:229px;height:812px;background:#272727;"></div>
<div style="left:1914px;top:29px;width:6px;height:812px;background:#1e1e1e;"></div>
<div style="left:1915px;top:29px;width:5px;height:224px;background:#353535;border-radius:2px;"></div>
<span style="left:1698px;top:38.26px;font-size:12.12px;line-height:15px;color:#dedede;letter-spacing:-0.102px;">Effects &amp; Presets</span>
<svg style="left:1894px;top:40.5px;" width="9" height="9" viewBox="0 0 9 9"><path d="M0 1 H9 M0 4.5 H9 M0 8 H9" stroke="#c8c8c8" stroke-width="1.3"/></svg>
<div style="left:1691.5px;top:64px;width:216px;height:19px;background:#171717;border-radius:2px;"></div>
<svg style="left:1697px;top:67.5px;" width="20" height="13" viewBox="0 0 20 13"><circle cx="8" cy="4.75" r="4.05" fill="none" stroke="#c8c8c8" stroke-width="1.3"/><path d="M5.2 8 L.6 12.4" stroke="#c8c8c8" stroke-width="1.5"/><path d="M12.4 8.2 h6.8 l-3.4 3.5z" fill="#c8c8c8"/></svg>
<div style="left:1685px;top:88px;width:229px;height:2px;background:#191919;"></div>
<svg style="left:1892.5px;top:92px;" width="14" height="13" viewBox="0 0 14 13"><path d="M0 0 H14 V13 H5 V5 H0Z" fill="#d4d4d4"/><path d="M1 7 H4 V11Z" fill="#d4d4d4"/></svg>
<div style="left:1685px;top:110px;width:229px;height:1px;background:#1e1e1e;"></div>
<span style="left:1698px;top:122.26px;font-size:12.12px;line-height:15px;color:#dedede;letter-spacing:-0.015px;">Preview</span>
<svg style="left:1894px;top:124.5px;" width="9" height="9" viewBox="0 0 9 9"><path d="M0 1 H9 M0 4.5 H9 M0 8 H9" stroke="#c8c8c8" stroke-width="1.3"/></svg>
<svg style="left:0px;top:0px;" width="1920" height="1088" viewBox="0 0 1920 1088"><rect x="1737" y="154" width="2" height="11" fill="#c8c8c8"/><path d="M1751 154 L1740 159.5 L1751 165Z" fill="#c8c8c8"/><path d="M1773 154 L1762 159.5 L1773 165Z" fill="#c8c8c8"/><rect x="1774.5" y="154" width="2" height="11" fill="#c8c8c8"/><path d="M1792 153.5 L1803 159.5 L1792 165.5Z" fill="#c8c8c8"/><rect x="1817" y="154" width="2" height="11" fill="#c8c8c8"/><path d="M1820.5 154 L1831.5 159.5 L1820.5 165Z" fill="#c8c8c8"/><path d="M1844 154 L1855 159.5 L1844 165Z" fill="#c8c8c8"/><rect x="1856" y="154" width="2" height="11" fill="#c8c8c8"/></svg>
<div style="left:1745px;top:179px;width:160px;height:1px;background:#222;"></div>
<span style="left:1691px;top:184.76px;font-size:12.12px;line-height:15px;color:#b0b0b0;letter-spacing:0.170px;">Shortcut</span>
<div style="left:1693px;top:204.5px;width:185px;height:19px;background:#1b1b1b;border-radius:2px;"></div>
<span style="left:1699px;top:206.96px;font-size:12.12px;line-height:15px;color:#e0e0e0;letter-spacing:-0.298px;">Spacebar</span>
<svg style="left:1865.0px;top:211px;" width="9" height="6" viewBox="0 0 9 6"><path d="M.8 .8 L4.5 4.6 L8.2 .8" fill="none" stroke="#c8c8c8" stroke-width="1.25"/></svg>
<svg style="left:1889px;top:206.5px;" width="16" height="15" viewBox="0 0 16 15"><path d="M4.5 5.5 A5.4 5.4 0 1 1 13 11" fill="none" stroke="#c8c8c8" stroke-width="1.5"/><path d="M1 3 L5 7.5 L7.5 2.2Z" fill="#c8c8c8"/><path d="M1 13.8 H15" stroke="#c8c8c8" stroke-width="1.4"/></svg>
<div style="left:1685px;top:233px;width:229px;height:1px;background:#1a1a1a;"></div>
<span style="left:1698px;top:244.46px;font-size:12.12px;line-height:15px;color:#dedede;letter-spacing:-0.233px;">Paragraph</span>
<svg style="left:1894px;top:246.5px;" width="9" height="9" viewBox="0 0 9 9"><path d="M0 1 H9 M0 4.5 H9 M0 8 H9" stroke="#c8c8c8" stroke-width="1.3"/></svg>
<div style="left:1720px;top:272px;width:22px;height:22px;background:#191919;border-radius:2px;"></div>
<svg style="left:0px;top:0px;" width="1920" height="1088" viewBox="0 0 1920 1088"><rect x="1695.4" y="275.5" width="17" height="1.5" fill="#c8c8c8"/><rect x="1695.4" y="280.1" width="13" height="1.5" fill="#c8c8c8"/><rect x="1695.4" y="284.7" width="17" height="1.5" fill="#c8c8c8"/><rect x="1695.4" y="289.3" width="13" height="1.5" fill="#c8c8c8"/><rect x="1723.0" y="275.5" width="17" height="1.5" fill="#4c9cf0"/><rect x="1725.0" y="280.1" width="13" height="1.5" fill="#4c9cf0"/><rect x="1723.0" y="284.7" width="17" height="1.5" fill="#4c9cf0"/><rect x="1725.0" y="289.3" width="13" height="1.5" fill="#4c9cf0"/><rect x="1750.4" y="275.5" width="17" height="1.5" fill="#c8c8c8"/><rect x="1754.4" y="280.1" width="13" height="1.5" fill="#c8c8c8"/><rect x="1750.4" y="284.7" width="17" height="1.5" fill="#c8c8c8"/><rect x="1754.4" y="289.3" width="13" height="1.5" fill="#c8c8c8"/><rect x="1784.8" y="275.5" width="16.5" height="1.5" fill="#c8c8c8"/><rect x="1784.8" y="280.1" width="16.5" height="1.5" fill="#c8c8c8"/><rect x="1784.8" y="284.7" width="16.5" height="1.5" fill="#c8c8c8"/><rect x="1784.8" y="289.3" width="11" height="1.5" fill="#c8c8c8"/><rect x="1812.8" y="275.5" width="16.5" height="1.5" fill="#c8c8c8"/><rect x="1812.8" y="280.1" width="16.5" height="1.5" fill="#c8c8c8"/><rect x="1812.8" y="284.7" width="16.5" height="1.5" fill="#c8c8c8"/><rect x="1815.5" y="289.3" width="11" height="1.5" fill="#c8c8c8"/><rect x="1840.7" y="275.5" width="16.5" height="1.5" fill="#c8c8c8"/><rect x="1840.7" y="280.1" width="16.5" height="1.5" fill="#c8c8c8"/><rect x="1840.7" y="284.7" width="16.5" height="1.5" fill="#c8c8c8"/><rect x="1846.2" y="289.3" width="11" height="1.5" fill="#c8c8c8"/><rect x="1874.0" y="275.5" width="16.5" height="1.5" fill="#c8c8c8"/><rect x="1874.0" y="280.1" width="16.5" height="1.5" fill="#c8c8c8"/><rect x="1874.0" y="284.7" width="16.5" height="1.5" fill="#c8c8c8"/><rect x="1874.0" y="289.3" width="16.5" height="1.5" fill="#c8c8c8"/><path d="M1692 314 h5 M1695 311.5 l2.6 2.5 l-2.6 2.5" fill="none" stroke="#c8c8c8" stroke-width="1.1"/><rect x="1699.5" y="306" width="1.2" height="16" fill="#c8c8c8"/><rect x="1702.5" y="307.5" width="7" height="1.2" fill="#c8c8c8"/><rect x="1702.5" y="310.6" width="5" height="1.2" fill="#c8c8c8"/><rect x="1702.5" y="313.7" width="7" height="1.2" fill="#c8c8c8"/><rect x="1702.5" y="316.8" width="5" height="1.2" fill="#c8c8c8"/><rect x="1702.5" y="319.9" width="7" height="1.2" fill="#c8c8c8"/><path d="M1772 309.5 h5 M1775 307 l2.6 2.5 l-2.6 2.5" fill="none" stroke="#c8c8c8" stroke-width="1.1"/><rect x="1780" y="307.6" width="9.5" height="4" fill="none" stroke="#c8c8c8" stroke-width="1.1"/><rect x="1779.5" y="315.0" width="10" height="1.2" fill="#c8c8c8"/><rect x="1779.5" y="318.2" width="7" height="1.2" fill="#c8c8c8"/><rect x="1779.5" y="321.4" width="10" height="1.2" fill="#c8c8c8"/><path d="M1846 306.5 h5 M1849 304 l2.6 2.5 l-2.6 2.5" fill="none" stroke="#c8c8c8" stroke-width="1.1"/><rect x="1856" y="305.5" width="6" height="1.2" fill="#c8c8c8"/><rect x="1853" y="308.8" width="10" height="1.2" fill="#c8c8c8"/><rect x="1853" y="312.1" width="10" height="1.2" fill="#c8c8c8"/><rect x="1853" y="315.4" width="10" height="1.2" fill="#c8c8c8"/><rect x="1853" y="318.7" width="10" height="1.2" fill="#c8c8c8"/><rect x="1692" y="330.5" width="7" height="1.2" fill="#c8c8c8"/><rect x="1692" y="333.6" width="5" height="1.2" fill="#c8c8c8"/><rect x="1692" y="336.7" width="7" height="1.2" fill="#c8c8c8"/><rect x="1692" y="339.8" width="5" height="1.2" fill="#c8c8c8"/><rect x="1692" y="342.9" width="7" height="1.2" fill="#c8c8c8"/><rect x="1701" y="329" width="1.2" height="16" fill="#c8c8c8"/><path d="M1710 337 h-5 M1707 334.5 l-2.6 2.5 l2.6 2.5" fill="none" stroke="#c8c8c8" stroke-width="1.1"/><rect x="1779.5" y="329.5" width="7" height="1.2" fill="#c8c8c8"/><rect x="1779.5" y="332.7" width="10" height="1.2" fill="#c8c8c8"/><rect x="1779.5" y="335.9" width="7" height="1.2" fill="#c8c8c8"/><path d="M1772 342.5 h5 M1775 340.0 l2.6 2.5 l-2.6 2.5" fill="none" stroke="#c8c8c8" stroke-width="1.1"/><rect x="1780" y="340.1" width="9.5" height="4" fill="none" stroke="#c8c8c8" stroke-width="1.1"/></svg>
<span style="left:1716px;top:307.26px;font-size:12.12px;line-height:15px;color:#4c9cf0;letter-spacing:-0.241px;">10</span>
<span style="left:1732.5px;top:307.26px;font-size:12.12px;line-height:15px;color:#b8b8b8;letter-spacing:0.100px;">px</span>
<span style="left:1798px;top:307.26px;font-size:12.12px;line-height:15px;color:#4c9cf0;letter-spacing:-0.638px;">-1</span>
<span style="left:1812px;top:307.26px;font-size:12.12px;line-height:15px;color:#b8b8b8;letter-spacing:0.100px;">px</span>
<span style="left:1870.5px;top:307.26px;font-size:12.12px;line-height:15px;color:#4c9cf0;letter-spacing:-0.241px;">0</span>
<span style="left:1880.5px;top:307.26px;font-size:12.12px;line-height:15px;color:#b8b8b8;letter-spacing:-0.150px;">px</span>
<span style="left:1716px;top:326.76px;font-size:12.12px;line-height:15px;color:#4c9cf0;letter-spacing:-0.741px;">0</span>
<span style="left:1726px;top:326.76px;font-size:12.12px;line-height:15px;color:#b8b8b8;letter-spacing:-0.150px;">px</span>
<span style="left:1798px;top:328.26px;font-size:12.12px;line-height:15px;color:#4c9cf0;letter-spacing:-0.741px;">0</span>
<span style="left:1808px;top:328.26px;font-size:12.12px;line-height:15px;color:#b8b8b8;letter-spacing:-0.150px;">px</span>
<div style="left:1846.5px;top:328px;width:21.5px;height:23.5px;background:#191919;border-radius:2px;"></div>
<svg style="left:0px;top:0px;" width="1920" height="1088" viewBox="0 0 1920 1088"><path d="M1847.7 334.5 L1852.7 339.0 L1847.7 343.5Z" fill="#4c9cf0"/><path d="M1859.7 332.5 H1866.7 V334.1 H1865.5 V345.5 H1863.9 V334.1 H1862.3 V345.5 H1860.7 V339.9 A3.7 3.7 0 0 1 1859.7 332.5Z" fill="#4c9cf0"/><circle cx="1859.3" cy="336.2" r="3.7" fill="#4c9cf0"/><path d="M1892.5 334.5 L1887.5 339.0 L1892.5 343.5Z" fill="#c8c8c8"/><path d="M1877.5 332.5 H1884.5 V334.1 H1883.3 V345.5 H1881.7 V334.1 H1880.1 V345.5 H1878.5 V339.9 A3.7 3.7 0 0 1 1877.5 332.5Z" fill="#c8c8c8"/><circle cx="1877.2" cy="336.2" r="3.7" fill="#c8c8c8"/></svg>
<div style="left:1685px;top:404px;width:229px;height:1px;background:#1a1a1a;"></div>
<span style="left:1698px;top:415.86px;font-size:12.12px;line-height:15px;color:#dedede;letter-spacing:-0.135px;">Character</span>
<svg style="left:1894px;top:418.1px;" width="9" height="9" viewBox="0 0 9 9"><path d="M0 1 H9 M0 4.5 H9 M0 8 H9" stroke="#c8c8c8" stroke-width="1.3"/></svg>
<div style="left:1691px;top:448.5px;width:116px;height:18.5px;background:#1b1b1b;border-radius:2px 0 0 2px;"></div>
<div style="left:1808px;top:448.5px;width:18px;height:18.5px;background:#1b1b1b;border-radius:0 2px 2px 0;"></div>
<span style="left:1698px;top:451.26px;font-size:12.12px;line-height:15px;color:#e0e0e0;letter-spacing:-0.061px;">Athelas</span>
<svg style="left:1812.5px;top:455.5px;" width="9" height="6" viewBox="0 0 9 6"><path d="M.8 .8 L4.5 4.6 L8.2 .8" fill="none" stroke="#c8c8c8" stroke-width="1.25"/></svg>
<div style="left:1691px;top:475.5px;width:116px;height:18.5px;background:#1b1b1b;border-radius:2px 0 0 2px;"></div>
<div style="left:1808px;top:475.5px;width:18px;height:18.5px;background:#1b1b1b;border-radius:0 2px 2px 0;"></div>
<span style="left:1698px;top:478.56px;font-size:12.12px;line-height:15px;color:#e0e0e0;letter-spacing:-0.135px;">Regular</span>
<svg style="left:1812.5px;top:482.5px;" width="9" height="6" viewBox="0 0 9 6"><path d="M.8 .8 L4.5 4.6 L8.2 .8" fill="none" stroke="#c8c8c8" stroke-width="1.25"/></svg>
<svg style="left:1834px;top:450px;" width="20" height="20" viewBox="0 0 20 20"><path d="M13.2 3.2 C14.8 1 17.5 1.2 18.5 2.6 C19.5 4 19 6 17 7.2 L15.3 8.6 L16.2 9.6 L14.8 11 L9.4 5.6 L10.8 4.2 L11.8 5.1Z" fill="#c8c8c8"/><path d="M11 7.5 L3.5 15 L2 18 L5 16.8 L12.7 9.2" fill="none" stroke="#c8c8c8" stroke-width="1.4"/></svg>
<div style="left:1875.5px;top:463px;width:32.5px;height:31px;background:#b9b9b9;"></div>
<div style="left:1883px;top:470px;width:18px;height:17px;background:#111;"></div>
<div style="left:1861px;top:447px;width:32.5px;height:32.5px;background:#3b3b3b;box-sizing:border-box;border:1px solid #0c0c0c;"></div>
<svg style="left:1894px;top:449px;" width="13" height="12" viewBox="0 0 13 12"><path d="M2 3.5 H7 A3.5 3.5 0 0 1 10.5 7 V9" fill="none" stroke="#c8c8c8" stroke-width="1.7"/><path d="M4.2 .5 L.6 3.5 L4.2 6.5Z M7.7 8 L10.5 11.8 L13.3 8Z" fill="#c8c8c8"/></svg>
<div style="left:1832px;top:475.5px;width:22px;height:9px;background:#000;box-sizing:border-box;border:1px solid #ddd;border-bottom:none;"></div>
<div style="left:1832px;top:484.5px;width:22px;height:9px;background:#fff;"></div>
<svg style="left:1861px;top:481px;" width="12" height="12" viewBox="0 0 12 12"><rect width="12" height="12" fill="#f4f4f4"/><path d="M0 12 L12 0" stroke="#e0392f" stroke-width="1.3"/></svg>
<span style="left:1689.5px;top:513.83px;font-size:9.7px;line-height:12px;color:#c8c8c8;font-family:'Liberation Serif',serif;font-weight:bold;">T</span>
<span style="left:1695px;top:502.43px;font-size:20.37px;line-height:24px;color:#c8c8c8;font-family:'Liberation Serif',serif;font-weight:bold;">T</span>
<span style="left:1718px;top:508.86px;font-size:12.12px;line-height:15px;color:#4c9cf0;letter-spacing:0.192px;">111</span>
<span style="left:1742px;top:508.86px;font-size:12.12px;line-height:15px;color:#b8b8b8;letter-spacing:0.100px;">px</span>
<svg style="left:1768.5px;top:513px;" width="7" height="6.5" viewBox="0 0 7 6.5"><path d="M0 0 H7 L3.5 6.5Z" fill="#b0b0b0"/></svg>
<svg style="left:1808px;top:506px;" width="18" height="20" viewBox="0 0 18 20"><path d="M3 3 V17 M.8 5.2 L3 2.6 L5.2 5.2 M.8 14.8 L3 17.4 L5.2 14.8" fill="none" stroke="#c8c8c8" stroke-width="1.1"/><path d="M7 9 H18 M7 19.4 H18" stroke="#c8c8c8" stroke-width="1"/></svg>
<span style="left:1816px;top:507.15px;font-size:9.21px;line-height:11px;color:#c8c8c8;">A</span>
<span style="left:1816px;top:517.45px;font-size:9.21px;line-height:11px;color:#c8c8c8;">A</span>
<span style="left:1843px;top:508.86px;font-size:12.12px;line-height:15px;color:#4c9cf0;letter-spacing:0.009px;">77</span>
<span style="left:1860px;top:508.86px;font-size:12.12px;line-height:15px;color:#b8b8b8;letter-spacing:0.100px;">px</span>
<svg style="left:1894.5px;top:513px;" width="7" height="6.5" viewBox="0 0 7 6.5"><path d="M0 0 H7 L3.5 6.5Z" fill="#b0b0b0"/></svg>
<span style="left:1688.5px;top:530.45px;font-size:12.61px;line-height:15px;color:#c8c8c8;">V</span>
<span style="left:1699px;top:530.45px;font-size:12.61px;line-height:15px;color:#c8c8c8;">A</span>
<svg style="left:1689px;top:529px;" width="22" height="20" viewBox="0 0 22 20"><path d="M12.2 2 L7.6 15" stroke="#c8c8c8" stroke-width="1.1"/><path d="M10.5 18.5 H19 M13 16.2 L10.5 18.5 L13 20.8" fill="none" stroke="#c8c8c8" stroke-width="1.2"/></svg>
<span style="left:1718px;top:531.26px;font-size:12.12px;line-height:15px;color:#5c5c5c;letter-spacing:0.135px;">Metrics</span>
<svg style="left:1768.5px;top:535.5px;" width="7" height="6.5" viewBox="0 0 7 6.5"><path d="M0 0 H7 L3.5 6.5Z" fill="#b0b0b0"/></svg>
<div style="left:1809px;top:532px;width:21px;height:11.5px;background:#c8c8c8;"></div>
<span style="left:1810.5px;top:532.00px;font-size:10.67px;line-height:13px;color:#262626;letter-spacing:2.235px;font-weight:bold;">VA</span>
<svg style="left:1809px;top:545px;" width="21" height="6" viewBox="0 0 21 6"><path d="M1 3 H20 M3.5 .6 L1 3 L3.5 5.4 M17.5 .6 L20 3 L17.5 5.4" fill="none" stroke="#c8c8c8" stroke-width="1.1"/></svg>
<span style="left:1843px;top:531.26px;font-size:12.12px;line-height:15px;color:#4c9cf0;">1</span>
<svg style="left:1894.5px;top:535.5px;" width="7" height="6.5" viewBox="0 0 7 6.5"><path d="M0 0 H7 L3.5 6.5Z" fill="#b0b0b0"/></svg>
<svg style="left:1692px;top:566.5px;" width="16" height="14" viewBox="0 0 16 14"><rect y="0" width="16" height="1.6" fill="#c8c8c8"/><rect y="5" width="16" height="2.4" fill="#c8c8c8"/><rect y="10.6" width="16" height="3.2" fill="#c8c8c8"/></svg>
<span style="left:1718px;top:567.66px;font-size:12.12px;line-height:15px;color:#4c9cf0;letter-spacing:0.009px;">18</span>
<span style="left:1735px;top:567.66px;font-size:12.12px;line-height:15px;color:#b8b8b8;letter-spacing:0.100px;">px</span>
<svg style="left:1768.5px;top:569.5px;" width="7" height="6.5" viewBox="0 0 7 6.5"><path d="M0 0 H7 L3.5 6.5Z" fill="#b0b0b0"/></svg>
<div style="left:1783px;top:565.5px;width:124px;height:18px;background:#1b1b1b;border-radius:2px;"></div>
<span style="left:1789px;top:567.66px;font-size:12.12px;line-height:15px;color:#e0e0e0;letter-spacing:-0.001px;">Fill Over Stroke</span>
<svg style="left:1893.5px;top:572px;" width="9" height="6" viewBox="0 0 9 6"><path d="M.8 .8 L4.5 4.6 L8.2 .8" fill="none" stroke="#c8c8c8" stroke-width="1.25"/></svg>
<svg style="left:1690px;top:599px;" width="8" height="18" viewBox="0 0 8 18"><path d="M3 2 V16 M.8 4.4 L3 1.8 L5.2 4.4 M.8 13.6 L3 16.2 L5.2 13.6" fill="none" stroke="#c8c8c8" stroke-width="1.1"/></svg>
<span style="left:1698.5px;top:596.06px;font-size:19.4px;line-height:23px;color:#c8c8c8;font-family:'Liberation Serif',serif;font-weight:bold;">T</span>
<span style="left:1718px;top:601.26px;font-size:12.12px;line-height:15px;color:#4c9cf0;letter-spacing:-0.074px;">100</span>
<span style="left:1742px;top:601.26px;font-size:12.12px;line-height:15px;color:#b8b8b8;letter-spacing:-0.277px;">%</span>
<svg style="left:1768.5px;top:605px;" width="7" height="6.5" viewBox="0 0 7 6.5"><path d="M0 0 H7 L3.5 6.5Z" fill="#b0b0b0"/></svg>
<span style="left:1810px;top:595.81px;font-size:17.46px;line-height:21px;color:#c8c8c8;font-family:'Liberation Serif',serif;font-weight:bold;">T</span>
<svg style="left:1808px;top:616px;" width="21" height="6" viewBox="0 0 21 6"><path d="M1 3 H20 M3.5 .6 L1 3 L3.5 5.4 M17.5 .6 L20 3 L17.5 5.4" fill="none" stroke="#c8c8c8" stroke-width="1.1"/></svg>
<span style="left:1843px;top:601.26px;font-size:12.12px;line-height:15px;color:#4c9cf0;letter-spacing:0.259px;">100</span>
<span style="left:1868px;top:601.26px;font-size:12.12px;line-height:15px;color:#b8b8b8;letter-spacing:-0.277px;">%</span>
<svg style="left:1894.5px;top:605px;" width="7" height="6.5" viewBox="0 0 7 6.5"><path d="M0 0 H7 L3.5 6.5Z" fill="#b0b0b0"/></svg>
<span style="left:1690px;top:622.32px;font-size:13.58px;line-height:16px;color:#c8c8c8;">A</span>
<span style="left:1700px;top:622.65px;font-size:9.21px;line-height:11px;color:#c8c8c8;">a</span>
<svg style="left:1690px;top:636px;" width="20" height="8" viewBox="0 0 20 8"><path d="M0 1 H10" stroke="#c8c8c8" stroke-width="1"/><path d="M14 7.5 V1 M11.8 3.2 L14 .8 L16.2 3.2" fill="none" stroke="#c8c8c8" stroke-width="1.1"/><path d="M10.5 .8 H17.5" stroke="#c8c8c8" stroke-width="1"/></svg>
<span style="left:1718px;top:624.76px;font-size:12.12px;line-height:15px;color:#4c9cf0;letter-spacing:-0.241px;">0</span>
<span style="left:1728px;top:624.76px;font-size:12.12px;line-height:15px;color:#b8b8b8;letter-spacing:0.100px;">px</span>
<svg style="left:1768.5px;top:628.5px;" width="7" height="6.5" viewBox="0 0 7 6.5"><path d="M0 0 H7 L3.5 6.5Z" fill="#b0b0b0"/></svg>
<svg style="left:1809px;top:622px;" width="20" height="21" viewBox="0 0 20 21"><path d="M2 1 V14 M17 1 V14" stroke="#c8c8c8" stroke-width="1" stroke-dasharray="1.5 1.5"/><path d="M5.5 4.5 H13.5 M9.5 2.5 V12 M6 11 C5 8.5 8 6.5 11 7 C14.5 7.6 14 12 10.5 12.5 M12.5 6.5 C12 9.5 9 12.5 6.5 12" fill="none" stroke="#c8c8c8" stroke-width="1.1"/><path d="M1 18 H6 M4 16 L6 18 L4 20 M19 18 H14 M16 16 L14 18 L16 20" fill="none" stroke="#c8c8c8" stroke-width="1.1"/></svg>
<span style="left:1843px;top:624.26px;font-size:12.12px;line-height:15px;color:#4c9cf0;letter-spacing:0.259px;">0</span>
<span style="left:1854px;top:624.26px;font-size:12.12px;line-height:15px;color:#b8b8b8;letter-spacing:-0.277px;">%</span>
<svg style="left:1894.5px;top:628.5px;" width="7" height="6.5" viewBox="0 0 7 6.5"><path d="M0 0 H7 L3.5 6.5Z" fill="#b0b0b0"/></svg>
<div style="left:1774px;top:657px;width:26.5px;height:21px;background:#191919;border-radius:2px;"></div>
<span style="left:1720px;top:657.41px;font-size:17.46px;line-height:21px;color:#c8c8c8;font-family:'Liberation Serif',serif;font-weight:bold;">T</span>
<span style="left:1748px;top:657.41px;font-size:17.46px;line-height:21px;color:#c8c8c8;font-family:'Liberation Serif',serif;font-style:italic;">T</span>
<span style="left:1777.5px;top:658.36px;font-size:16.0px;line-height:19px;color:#4c9cf0;letter-spacing:0.227px;font-family:'Liberation Serif',serif;">TT</span>
<span style="left:1806px;top:657.41px;font-size:17.46px;line-height:21px;color:#c8c8c8;font-family:'Liberation Serif',serif;">T</span>
<span style="left:1816.5px;top:661.64px;font-size:13.09px;line-height:16px;color:#c8c8c8;font-family:'Liberation Serif',serif;">T</span>
<span style="left:1842px;top:657.41px;font-size:17.46px;line-height:21px;color:#c8c8c8;font-family:'Liberation Serif',serif;">T</span>
<span style="left:1853px;top:658.08px;font-size:7.76px;line-height:9px;color:#c8c8c8;font-family:'Liberation Serif',serif;">1</span>
<span style="left:1870px;top:657.41px;font-size:17.46px;line-height:21px;color:#c8c8c8;font-family:'Liberation Serif',serif;">T</span>
<span style="left:1881px;top:668.58px;font-size:7.76px;line-height:9px;color:#c8c8c8;font-family:'Liberation Serif',serif;">1</span>
<div style="left:1697px;top:691px;width:14.5px;height:14.5px;background:transparent;box-sizing:border-box;border:1.6px solid #a8a8a8;border-radius:2px;"></div>
<span style="left:1716px;top:691.26px;font-size:12.12px;line-height:15px;color:#b8b8b8;letter-spacing:0.016px;">Ligatures</span>
<div style="left:1806.5px;top:691px;width:14.5px;height:14.5px;background:transparent;box-sizing:border-box;border:1.6px solid #a8a8a8;border-radius:2px;"></div>
<span style="left:1826px;top:691.26px;font-size:12.12px;line-height:15px;color:#b8b8b8;letter-spacing:0.142px;">Hindi Digits</span>
<div style="left:1685px;top:744px;width:229px;height:1px;background:#1a1a1a;"></div>
<span style="left:1698px;top:755.06px;font-size:12.12px;line-height:15px;color:#dedede;letter-spacing:0.110px;">Align</span>
<svg style="left:1894px;top:757.5px;" width="9" height="9" viewBox="0 0 9 9"><path d="M0 1 H9 M0 4.5 H9 M0 8 H9" stroke="#c8c8c8" stroke-width="1.3"/></svg>
<span style="left:1691.3px;top:784.06px;font-size:12.12px;line-height:15px;color:#b8b8b8;letter-spacing:0.010px;">Align Layers to:</span>
<div style="left:1790.5px;top:782.5px;width:120.5px;height:17px;background:#1b1b1b;border-radius:2px;"></div>
<span style="left:1796px;top:784.06px;font-size:12.12px;line-height:15px;color:#e0e0e0;letter-spacing:0.149px;">Composition</span>
<svg style="left:1897.5px;top:788px;" width="9" height="6" viewBox="0 0 9 6"><path d="M.8 .8 L4.5 4.6 L8.2 .8" fill="none" stroke="#c8c8c8" stroke-width="1.25"/></svg>
<svg style="left:0px;top:0px;" width="1920" height="1088" viewBox="0 0 1920 1088"><rect x="1697.4" y="807.5" width="1.3" height="20" fill="#c6c6c6"/><rect x="1700" y="810" width="8.5" height="5.5" fill="#c6c6c6"/><rect x="1700" y="818.5" width="14.5" height="5.5" fill="#c6c6c6"/><rect x="1743.8" y="807.5" width="1.3" height="20" fill="#c6c6c6"/><rect x="1740" y="810" width="9" height="5.5" fill="#c6c6c6"/><rect x="1737" y="818.5" width="15" height="5.5" fill="#c6c6c6"/><rect x="1790.7" y="807.5" width="1.3" height="20" fill="#c6c6c6"/><rect x="1781" y="810" width="8.5" height="5.5" fill="#c6c6c6"/><rect x="1775" y="818.5" width="14.5" height="5.5" fill="#c6c6c6"/><rect x="1811" y="808" width="20" height="1.3" fill="#c6c6c6"/><rect x="1814" y="810.5" width="5.5" height="14.5" fill="#c6c6c6"/><rect x="1822.5" y="810.5" width="6.5" height="9" fill="#c6c6c6"/><rect x="1849" y="816.3" width="20" height="1.3" fill="#c6c6c6"/><rect x="1852" y="809.5" width="5.5" height="15" fill="#c6c6c6"/><rect x="1860.5" y="812" width="6.5" height="10" fill="#c6c6c6"/><rect x="1887" y="825.5" width="20" height="1.3" fill="#c6c6c6"/><rect x="1890" y="809.5" width="5.5" height="15" fill="#c6c6c6"/><rect x="1898.5" y="815" width="6.5" height="9.5" fill="#c6c6c6"/></svg>
<div style="left:1699px;top:838.5px;width:3px;height:1.5px;background:#555;"></div>
<div style="left:1718px;top:838px;width:4px;height:2px;background:#555;"></div>
<div style="left:0px;top:841px;width:1920px;height:4px;background:#181818;"></div>
<div style="left:0px;top:845px;width:1920px;height:2px;background:#2b74b8;"></div>
<div style="left:0px;top:847px;width:1920px;height:241px;background:#272727;"></div>
<span style="left:26px;top:853.26px;font-size:12.12px;line-height:15px;color:#c0c0c0;letter-spacing:-0.126px;">Render Queue</span>
<div style="left:166px;top:853px;width:11px;height:11px;background:#9d9d9d;"></div>
<span style="left:189px;top:853.26px;font-size:12.12px;line-height:15px;color:#c0c0c0;letter-spacing:-0.073px;">Comp 1</span>
<div style="left:292px;top:853px;width:11px;height:11px;background:#9d9d9d;"></div>
<span style="left:316px;top:853.26px;font-size:12.12px;line-height:15px;color:#c0c0c0;letter-spacing:-0.126px;">Circle 1 Comp 1</span>
<div style="left:464px;top:853px;width:11px;height:11px;background:#9d9d9d;"></div>
<span style="left:487px;top:853.26px;font-size:12.12px;line-height:15px;color:#c0c0c0;letter-spacing:-0.098px;">Eye Opening</span>
<div style="left:617px;top:853px;width:11px;height:11px;background:#9d9d9d;"></div>
<span style="left:640.7px;top:853.26px;font-size:12.12px;line-height:15px;color:#c0c0c0;letter-spacing:-0.034px;">Pre-comp 1</span>
<svg style="left:747.5px;top:857px;" width="7" height="7" viewBox="0 0 7 7"><path d="M.8 .8 L6.2 6.2 M6.2 .8 L.8 6.2" stroke="#b0b0b0" stroke-width="1.1"/></svg>
<div style="left:764.5px;top:853px;width:11px;height:11px;background:#9d9d9d;"></div>
<span style="left:788px;top:853.26px;font-size:12.12px;line-height:15px;color:#e6e6e6;letter-spacing:0.086px;">Pre-comp 2</span>
<svg style="left:863px;top:856.0px;" width="9" height="9" viewBox="0 0 9 9"><path d="M0 1 H9 M0 4.5 H9 M0 8 H9" stroke="#d0d0d0" stroke-width="1.3"/></svg>
<div style="left:748px;top:871.5px;width:124px;height:2px;background:#d4d4d4;"></div>
<span style="left:10px;top:879.76px;font-size:16.0px;line-height:19px;color:#4c9cf0;letter-spacing:0.423px;font-weight:bold;">0:00:03:16</span>
<span style="left:8px;top:899.20px;font-size:10.67px;line-height:13px;color:#5a6cd8;letter-spacing:0.198px;">00106 (29.97 fps)</span>
<div style="left:109px;top:885px;width:905px;height:19.5px;background:#171717;border-radius:2px;"></div>
<svg style="left:116px;top:889px;" width="20" height="13" viewBox="0 0 20 13"><circle cx="8" cy="4.75" r="4.05" fill="none" stroke="#c8c8c8" stroke-width="1.3"/><path d="M5.2 8 L.6 12.4" stroke="#c8c8c8" stroke-width="1.5"/><path d="M12.4 8.2 h6.8 l-3.4 3.5z" fill="#c8c8c8"/></svg>
<svg style="left:1031px;top:886px;" width="22" height="17" viewBox="0 0 22 17"><path d="M1 3 H8 M8 3 V12 H14 M8 7 H14" fill="none" stroke="#c8c8c8" stroke-width="1.3"/><rect x="0" y="1.5" width="4" height="3" fill="#c8c8c8"/><rect x="13" y="1.6" width="7" height="3" fill="#c8c8c8"/><rect x="13" y="5.6" width="7" height="3" fill="#c8c8c8"/><rect x="13" y="10.5" width="7" height="3" fill="#c8c8c8"/><path d="M15 15 h5 l-2.5 2.4z" fill="#c8c8c8"/></svg>
<svg style="left:1070px;top:886px;" width="20" height="18" viewBox="0 0 20 18"><path d="M3.5 8.5 A6.5 6.5 0 0 1 16.5 8.5 Z" fill="#c8c8c8"/><path d="M10 8 V12" stroke="#c8c8c8" stroke-width="1.4"/><rect x="1" y="11" width="18" height="6" rx="1" fill="#8a8a8a"/><circle cx="7.6" cy="6" r="1" fill="#272727"/><circle cx="12.4" cy="6" r="1" fill="#272727"/></svg>
<svg style="left:1100px;top:886px;" width="19" height="18" viewBox="0 0 19 18"><rect x="4" y="0" width="15" height="13" fill="#c8c8c8"/><rect x="7" y="2" width="9" height="9" fill="#777"/><path d="M5.4 1.5v1.6M5.4 4.7v1.6M5.4 7.9v1.6M17.6 1.5v1.6M17.6 4.7v1.6M17.6 7.9v1.6" stroke="#272727" stroke-width="1.1"/><path d="M2 3 V15.5 H15 M0 6 V17.5 H12" fill="none" stroke="#c8c8c8" stroke-width="1.3"/></svg>
<svg style="left:1129px;top:885px;" width="19" height="19" viewBox="0 0 19 19"><circle cx="11.5" cy="7.5" r="6.3" fill="#3a4db0" stroke="#3f86e0" stroke-width="1.5"/><path d="M5.5 7.5 A6.3 6.3 0 0 0 9 15.5 M2.5 9.5 A6.3 6.3 0 0 0 6 17.5" fill="none" stroke="#3f86e0" stroke-width="1.5"/></svg>
<svg style="left:1167px;top:885px;" width="19" height="18" viewBox="0 0 19 18"><rect x="1.7" y="3.7" width="15.6" height="13.6" rx="1" fill="none" stroke="#c8c8c8" stroke-width="1.3"/><path d="M4 1 V3.5 M15 1 V3.5 M0 6.5 H2 M17 14.5 H19" stroke="#c8c8c8" stroke-width="1.2"/><path d="M3 6.5 C8 6.5 8 14.5 16 14.5" fill="none" stroke="#c8c8c8" stroke-width="1.3"/></svg>
<div style="left:0px;top:936.4px;width:1203px;height:1px;background:#202020;"></div>
<svg style="left:2.8px;top:922px;" width="12" height="9.4" viewBox="0 0 12 9.4"><path d="M0 4.7 C2.6 0 9.4 0 12 4.7 C9.4 9.4 2.6 9.4 0 4.7Z" fill="#c8c8c8"/><circle cx="6" cy="4.7" r="2.8" fill="#272727"/><circle cx="6" cy="4.7" r="1.5" fill="#c8c8c8"/></svg>
<svg style="left:18px;top:920px;" width="14" height="13" viewBox="0 0 14 13"><path d="M0 4.5 H3 L7 .8 V12.2 L3 8.5 H0Z" fill="#c8c8c8"/><path d="M9 3.5 A3.5 3.5 0 0 1 9 9.5 M10.5 1 A6.5 6.5 0 0 1 10.5 12" fill="none" stroke="#c8c8c8" stroke-width="1.3"/></svg>
<svg style="left:37.5px;top:922.5px;" width="9" height="9" viewBox="0 0 9 9"><circle cx="4.5" cy="4.5" r="4" fill="#c8c8c8"/></svg>
<svg style="left:53.5px;top:920.5px;" width="11" height="12" viewBox="0 0 11 12"><path d="M2.8 5.2 V3.6 A2.7 2.7 0 0 1 8.2 3.6 V5.2" fill="none" stroke="#c8c8c8" stroke-width="1.5"/><rect x="0.3" y="5.2" width="10.4" height="6.6" rx=".8" fill="#c8c8c8"/><rect x="4.6" y="7.2" width="1.8" height="2.8" fill="#272727"/></svg>
<div style="left:72px;top:919px;width:1px;height:15px;background:#1c1c1c;"></div>
<svg style="left:87px;top:920px;" width="14" height="14" viewBox="0 0 14 14"><path d="M.5 .5 H6.5 L13.5 7.5 L7.5 13.5 L.5 6.5Z" fill="#c8c8c8"/><circle cx="3.8" cy="3.8" r="1.3" fill="#272727"/></svg>
<div style="left:106px;top:919px;width:1px;height:15px;background:#1c1c1c;"></div>
<span style="left:114.5px;top:921.83px;font-size:9.7px;line-height:12px;color:#a8a8a8;font-style:italic;">#</span>
<div style="left:143.5px;top:919px;width:1px;height:15px;background:#1c1c1c;"></div>
<span style="left:151px;top:921.51px;font-size:10.19px;line-height:12px;color:#b0b0b0;letter-spacing:-0.050px;">Layer Name</span>
<div style="left:419px;top:919px;width:1px;height:15px;background:#1c1c1c;"></div>
<div style="left:605px;top:919px;width:1px;height:15px;background:#1c1c1c;"></div>
<div style="left:1185px;top:919px;width:1px;height:14px;background:#161616;"></div>
<svg style="left:424.8px;top:921.2px;" width="14" height="11" viewBox="0 0 14 11"><path d="M1.5 6.2 A5.2 5 0 0 1 12 6.2 Z" fill="#c8c8c8"/><circle cx="4.9" cy="4.2" r=".9" fill="#272727"/><circle cx="8.6" cy="4.2" r=".9" fill="#272727"/><path d="M6.75 6 V9.6 M4 6.2 V8.4 Q4 9.8 2.8 9.6 M9.5 6.2 V8.4 Q9.5 9.8 10.7 9.6" fill="none" stroke="#c8c8c8" stroke-width="1.2"/><path d="M0 10.3 H3.2 M10.3 10.3 H13.5" stroke="#c8c8c8" stroke-width="1.2"/></svg>
<svg style="left:442.5px;top:921px;" width="12" height="12" viewBox="0 0 12 12"><circle cx="6" cy="6" r="2.4" fill="none" stroke="#c8c8c8" stroke-width="1.2"/><path d="M6 0 V2.4 M6 9.6 V12 M0 6 H2.4 M9.6 6 H12 M1.8 1.8 L3.4 3.4 M8.6 8.6 L10.2 10.2 M10.2 1.8 L8.6 3.4 M3.4 8.6 L1.8 10.2" stroke="#c8c8c8" stroke-width="1.1"/></svg>
<svg style="left:459px;top:920px;" width="12" height="13" viewBox="0 0 12 13"><path d="M1 1 L3.5 3.5" stroke="#c8c8c8" stroke-width="1.8"/><path d="M4 4 L11 12" stroke="#c8c8c8" stroke-width="1.4" stroke-dasharray="1.6 1.2"/></svg>
<span style="left:475px;top:919.14px;font-size:13.09px;line-height:16px;color:#c8c8c8;letter-spacing:1.409px;font-style:italic;">fx</span>
<svg style="left:491.5px;top:920px;" width="14" height="13" viewBox="0 0 14 13"><rect x="0" y="0" width="14" height="13" fill="#c8c8c8"/><rect x="3.4" y="2.8" width="8.6" height="7.4" fill="#6a6a6a"/><path d="M1.5 1.5v1.5M1.5 4.3v1.5M1.5 7.1v1.5M1.5 9.9v1.5" stroke="#272727" stroke-width="1.1"/><path d="M3.6 4.5 H12 M3.6 6.5 H12 M3.6 8.5 H12" stroke="#c8c8c8" stroke-width=".7"/></svg>
<svg style="left:508px;top:920px;" width="15" height="13" viewBox="0 0 15 13"><circle cx="9.5" cy="5" r="4.3" fill="#8c8c8c" stroke="#c8c8c8" stroke-width="1.2"/><path d="M4.7 5.5 A4.3 4.3 0 0 0 7 10.8 M2.2 7.5 A4.3 4.3 0 0 0 4.6 12.4" fill="none" stroke="#c8c8c8" stroke-width="1.2"/></svg>
<svg style="left:526.5px;top:921px;" width="12" height="12" viewBox="0 0 12 12"><circle cx="6" cy="6" r="5.3" fill="#c8c8c8"/><path d="M2.2 9.8 A5.3 5.3 0 0 0 9.8 2.2Z" fill="#272727"/><circle cx="6" cy="6" r="5.3" fill="none" stroke="#c8c8c8" stroke-width="1.1"/></svg>
<svg style="left:543px;top:920.5px;" width="12" height="13" viewBox="0 0 12 13"><path d="M6 .8 L11 3.5 V9.5 L6 12.2 L1 9.5 V3.5Z M1 3.5 L6 6.2 L11 3.5 M6 6.2 V12.2" fill="none" stroke="#c8c8c8" stroke-width="1.2"/></svg>
<span style="left:611.5px;top:921.51px;font-size:10.19px;line-height:12px;color:#b0b0b0;letter-spacing:0.128px;">Mode</span>
<span style="left:750.5px;top:921.51px;font-size:10.19px;line-height:12px;color:#b0b0b0;">T</span>
<span style="left:769.5px;top:921.51px;font-size:10.19px;line-height:12px;color:#b0b0b0;letter-spacing:-0.083px;">Track Matte</span>
<svg style="left:918px;top:920.5px;" width="13" height="13" viewBox="0 0 13 13"><rect x="0" y="0" width="13" height="13" rx="1" fill="#c8c8c8"/><circle cx="6.5" cy="6.5" r="3.8" fill="#272727"/></svg>
<svg style="left:934px;top:920.5px;" width="13" height="13" viewBox="0 0 13 13"><rect x="0" y="1" width="11.5" height="12" rx="1" fill="#c8c8c8"/><path d="M3 10.5 C3 6 6 4 9.5 3.5 C9.5 7 7.5 10 3 10.5Z" fill="#272727"/><path d="M6 8 L13 0" stroke="#c8c8c8" stroke-width="1.2"/></svg>
<span style="left:957px;top:921.51px;font-size:10.19px;line-height:12px;color:#b0b0b0;letter-spacing:0.141px;">Parent &amp; Link</span>
<div style="left:0;top:938px;width:1200px;height:8px;overflow:hidden;">
<span style="left:115px;top:-8.24px;font-size:12.12px;line-height:15px;color:#c4c4c4;letter-spacing:-0.003px;">Masks</span>
<svg style="left:97px;top:-6px;" width="6" height="9" viewBox="0 0 6 9"><path d="M.8 .8 L4.6 4.5 L.8 8.2" fill="none" stroke="#c8c8c8" stroke-width="1.3"/></svg>
</div>
<div style="left:0px;top:945.5px;width:1203px;height:1px;background:#222222;"></div>
<div style="left:0px;top:964.3px;width:1203px;height:1px;background:#222222;"></div>
<div style="left:0px;top:983.5px;width:1203px;height:1px;background:#222222;"></div>
<div style="left:0px;top:1002.5px;width:1203px;height:1px;background:#222222;"></div>
<div style="left:0px;top:1022px;width:1203px;height:1px;background:#222222;"></div>
<div style="left:0px;top:1041px;width:1203px;height:1px;background:#222222;"></div>
<svg style="left:97px;top:952.1px;" width="6" height="9" viewBox="0 0 6 9"><path d="M.8 .8 L4.8 4.5 L.8 8.2" fill="none" stroke="#c8c8c8" stroke-width="1.3"/></svg>
<span style="left:115px;top:949.86px;font-size:12.12px;line-height:15px;color:#c4c4c4;letter-spacing:0.081px;">Transform</span>
<svg style="left:97px;top:971.1px;" width="6" height="9" viewBox="0 0 6 9"><path d="M.8 .8 L4.8 4.5 L.8 8.2" fill="none" stroke="#c8c8c8" stroke-width="1.3"/></svg>
<span style="left:115px;top:968.86px;font-size:12.12px;line-height:15px;color:#c4c4c4;letter-spacing:-0.057px;">Layer Styles</span>
<span style="left:424.5px;top:949.06px;font-size:12.12px;line-height:15px;color:#4c9cf0;letter-spacing:-0.332px;">Reset</span>
<span style="left:424.5px;top:968.06px;font-size:12.12px;line-height:15px;color:#4c9cf0;letter-spacing:-0.332px;">Reset</span>
<div style="left:0px;top:984.5px;width:1181px;height:18px;background:#313131;"></div>
<div style="left:2px;top:967.5px;width:14.5px;height:15px;background:#1e1e1e;"></div>
<div style="left:2px;top:986px;width:14.5px;height:15px;background:#1e1e1e;"></div>
<div style="left:2px;top:1024.5px;width:14.5px;height:15px;background:#1e1e1e;"></div>
<div style="left:2px;top:1043.5px;width:14.5px;height:15px;background:#1e1e1e;"></div>
<div style="left:52px;top:986px;width:14.5px;height:15px;background:#1e1e1e;"></div>
<svg style="left:78px;top:991.6px;" width="10" height="6" viewBox="0 0 10 6"><path d="M.8 .8 L5 4.8 L9.2 .8" fill="none" stroke="#c8c8c8" stroke-width="1.4"/></svg>
<div style="left:92px;top:987px;width:13.5px;height:13.5px;background:#6480ee;"></div>
<span style="left:115.5px;top:986.86px;font-size:12.12px;line-height:15px;color:#c8c8c8;font-weight:bold;">4</span>
<svg style="left:148.5px;top:986.5px;" width="13" height="12.5" viewBox="0 0 13 12.5"><path d="M6.5 0 L8.3 4.4 L13 4.8 L9.4 7.8 L10.5 12.5 L6.5 10 L2.5 12.5 L3.6 7.8 L0 4.8 L4.7 4.4Z" fill="#d8d8d8"/></svg>
<span style="left:169px;top:986.86px;font-size:12.12px;line-height:15px;color:#d0d0d0;letter-spacing:-0.018px;font-weight:bold;">objects Outlines</span>
<svg style="left:424.8px;top:987.7px;" width="14" height="11" viewBox="0 0 14 11"><path d="M1.5 6.2 A5.2 5 0 0 1 12 6.2 Z" fill="#c8c8c8"/><circle cx="4.9" cy="4.2" r=".9" fill="#272727"/><circle cx="8.6" cy="4.2" r=".9" fill="#272727"/><path d="M6.75 6 V9.6 M4 6.2 V8.4 Q4 9.8 2.8 9.6 M9.5 6.2 V8.4 Q9.5 9.8 10.7 9.6" fill="none" stroke="#c8c8c8" stroke-width="1.2"/><path d="M0 10.3 H3.2 M10.3 10.3 H13.5" stroke="#c8c8c8" stroke-width="1.2"/></svg>
<svg style="left:442.5px;top:987.5px;" width="12" height="12" viewBox="0 0 12 12"><circle cx="6" cy="6" r="2.4" fill="none" stroke="#5a5a5a" stroke-width="1.2"/><path d="M6 0 V2.4 M6 9.6 V12 M0 6 H2.4 M9.6 6 H12 M1.8 1.8 L3.4 3.4 M8.6 8.6 L10.2 10.2 M10.2 1.8 L8.6 3.4 M3.4 8.6 L1.8 10.2" stroke="#5a5a5a" stroke-width="1.1"/></svg>
<svg style="left:459px;top:987px;" width="12" height="12" viewBox="0 0 12 12"><path d="M1 11 L11 1" stroke="#c8c8c8" stroke-width="1.5"/></svg>
<svg style="left:508px;top:986.5px;" width="15" height="13" viewBox="0 0 15 13"><circle cx="9.5" cy="5" r="4.3" fill="#8c8c8c" stroke="#c8c8c8" stroke-width="1.2"/><path d="M4.7 5.5 A4.3 4.3 0 0 0 7 10.8 M2.2 7.5 A4.3 4.3 0 0 0 4.6 12.4" fill="none" stroke="#c8c8c8" stroke-width="1.2"/></svg>
<div style="left:525px;top:986px;width:14px;height:15px;background:#282828;"></div>
<div style="left:542.5px;top:986px;width:14px;height:15px;background:#282828;"></div>
<div style="left:609.5px;top:985.5px;width:130.5px;height:16px;background:#1d1d1d;border-radius:2px;"></div>
<span style="left:616px;top:986.86px;font-size:12.12px;line-height:15px;color:#e0e0e0;letter-spacing:0.324px;">Normal</span>
<svg style="left:725.5px;top:990.9px;" width="9" height="6" viewBox="0 0 9 6"><path d="M.8 .8 L4.5 4.6 L8.2 .8" fill="none" stroke="#c8c8c8" stroke-width="1.25"/></svg>
<div style="left:746px;top:986px;width:14px;height:15px;background:#282828;"></div>
<svg style="left:764.5px;top:986.6px;" width="14" height="14" viewBox="0 0 14 14"><path d="M12.52 4.19 L11.83 3.25 L10.99 2.47 L10.03 1.87 L8.99 1.47 L7.91 1.28 L6.82 1.29 L5.77 1.51 L4.80 1.91 L3.93 2.48 L3.19 3.19 L2.62 4.02 L2.21 4.93 L1.99 5.88 L1.95 6.84 L2.09 7.78 L2.40 8.66 L2.86 9.45 L3.45 10.13 L4.15 10.67 L4.93 11.07 L5.75 11.31 L6.59 11.38 L7.41 11.30 L8.18 11.07 L8.89 10.71 L9.50 10.22 L10.00 9.64 L10.37 8.99 L10.61 8.30 L10.70 7.59 L10.67 6.88 L10.50 6.22 L10.22 5.61 L9.83 5.08 L9.36 4.64 L8.83 4.30 L8.26 4.08 L7.68 3.98 L7.09 3.99 L6.54 4.10 L6.03 4.32 L5.59 4.62 L5.22 4.98 L4.94 5.40 L4.75 5.85 L4.65 6.32 L4.65 6.78 L4.73 7.21 L4.89 7.61 L5.11 7.96 L5.39 8.25 L5.71 8.47 L6.05 8.61 L6.39 8.68 L6.73 8.69 L7.05 8.63 L7.34 8.51 L7.58 8.34 L7.78 8.14 L7.92 7.92" fill="none" stroke="#c8c8c8" stroke-width="1.15" stroke-linecap="round"/></svg>
<svg style="left:777.5px;top:988px;" width="4" height="8" viewBox="0 0 4 8"><circle cx="2" cy="1.4" r="1" fill="#c8c8c8"/><circle cx="2" cy="6.4" r="1" fill="#c8c8c8"/></svg>
<div style="left:784.5px;top:985.5px;width:130.5px;height:16px;background:#1d1d1d;border-radius:2px;"></div>
<span style="left:790.5px;top:986.86px;font-size:12.12px;line-height:15px;color:#e0e0e0;letter-spacing:0.166px;">No Matte</span>
<svg style="left:900.5px;top:990.9px;" width="9" height="6" viewBox="0 0 9 6"><path d="M.8 .8 L4.5 4.6 L8.2 .8" fill="none" stroke="#c8c8c8" stroke-width="1.25"/></svg>
<svg style="left:956.7px;top:985.7px;" width="14" height="14" viewBox="0 0 14 14"><path d="M12.52 4.19 L11.83 3.25 L10.99 2.47 L10.03 1.87 L8.99 1.47 L7.91 1.28 L6.82 1.29 L5.77 1.51 L4.80 1.91 L3.93 2.48 L3.19 3.19 L2.62 4.02 L2.21 4.93 L1.99 5.88 L1.95 6.84 L2.09 7.78 L2.40 8.66 L2.86 9.45 L3.45 10.13 L4.15 10.67 L4.93 11.07 L5.75 11.31 L6.59 11.38 L7.41 11.30 L8.18 11.07 L8.89 10.71 L9.50 10.22 L10.00 9.64 L10.37 8.99 L10.61 8.30 L10.70 7.59 L10.67 6.88 L10.50 6.22 L10.22 5.61 L9.83 5.08 L9.36 4.64 L8.83 4.30 L8.26 4.08 L7.68 3.98 L7.09 3.99 L6.54 4.10 L6.03 4.32 L5.59 4.62 L5.22 4.98 L4.94 5.40 L4.75 5.85 L4.65 6.32 L4.65 6.78 L4.73 7.21 L4.89 7.61 L5.11 7.96 L5.39 8.25 L5.71 8.47 L6.05 8.61 L6.39 8.68 L6.73 8.69 L7.05 8.63 L7.34 8.51 L7.58 8.34 L7.78 8.14 L7.92 7.92" fill="none" stroke="#c8c8c8" stroke-width="1.15" stroke-linecap="round"/></svg>
<div style="left:977.5px;top:985.5px;width:202.5px;height:16px;background:#1d1d1d;border-radius:2px;"></div>
<span style="left:984px;top:986.86px;font-size:12.12px;line-height:15px;color:#e0e0e0;letter-spacing:0.006px;">None</span>
<svg style="left:1166.0px;top:990.9px;" width="9" height="6" viewBox="0 0 9 6"><path d="M.8 .8 L4.5 4.6 L8.2 .8" fill="none" stroke="#c8c8c8" stroke-width="1.25"/></svg>
<svg style="left:97px;top:1011.3px;" width="10" height="6" viewBox="0 0 10 6"><path d="M.8 .8 L5 4.8 L9.2 .8" fill="none" stroke="#c8c8c8" stroke-width="1.4"/></svg>
<span style="left:115px;top:1007.06px;font-size:12.12px;line-height:15px;color:#c4c4c4;letter-spacing:-0.001px;">Contents</span>
<span style="left:558px;top:1007.06px;font-size:12.12px;line-height:15px;color:#b4b4b4;letter-spacing:0.017px;">Add:</span>
<svg style="left:587px;top:1005.5px;" width="12.5" height="12.5" viewBox="0 0 12.5 12.5"><circle cx="6.2" cy="6.2" r="6.1" fill="#dcdcdc"/><path d="M4.4 3 L9.6 6.2 L4.4 9.4Z" fill="#272727"/></svg>
<svg style="left:116.5px;top:1028.3px;" width="6" height="9" viewBox="0 0 6 9"><path d="M.8 .8 L4.8 4.5 L.8 8.2" fill="none" stroke="#c8c8c8" stroke-width="1.3"/></svg>
<span style="left:134.5px;top:1026.06px;font-size:12.12px;line-height:15px;color:#c4c4c4;letter-spacing:-0.042px;">Group 1</span>
<div style="left:425.5px;top:1024px;width:173px;height:15px;background:#1d1d1d;border-radius:2px;"></div>
<span style="left:432.5px;top:1024.76px;font-size:12.12px;line-height:15px;color:#e0e0e0;letter-spacing:0.240px;">Normal</span>
<svg style="left:585.0px;top:1028.5px;" width="9" height="6" viewBox="0 0 9 6"><path d="M.8 .8 L4.5 4.6 L8.2 .8" fill="none" stroke="#c8c8c8" stroke-width="1.25"/></svg>
<svg style="left:116px;top:1049.3px;" width="10" height="6" viewBox="0 0 10 6"><path d="M.8 .8 L5 4.8 L9.2 .8" fill="none" stroke="#c8c8c8" stroke-width="1.4"/></svg>
<span style="left:134.5px;top:1045.06px;font-size:12.12px;line-height:15px;color:#c4c4c4;letter-spacing:-0.104px;">Trim Paths 1</span>
<svg style="left:150.5px;top:1061.5px;" width="14" height="15" viewBox="0 0 14 15"><circle cx="7" cy="8.5" r="5.6" fill="none" stroke="#c8c8c8" stroke-width="1.4"/><path d="M5 1 H9 M7 1 V3 M2.4 2.6 L3.8 4" stroke="#c8c8c8" stroke-width="1.3"/></svg>
<span style="left:171.5px;top:1063.86px;font-size:12.12px;line-height:15px;color:#c4c4c4;letter-spacing:0.081px;">Start</span>
<span style="left:425.5px;top:1063.26px;font-size:12.12px;line-height:15px;color:#4c9cf0;letter-spacing:0.217px;">0,0</span>
<span style="left:443.5px;top:1063.26px;font-size:12.12px;line-height:15px;color:#c0c0c0;letter-spacing:-0.777px;">%</span>
<svg style="left:971px;top:1061.4px;" width="14" height="14" viewBox="0 0 14 14"><path d="M12.52 4.19 L11.83 3.25 L10.99 2.47 L10.03 1.87 L8.99 1.47 L7.91 1.28 L6.82 1.29 L5.77 1.51 L4.80 1.91 L3.93 2.48 L3.19 3.19 L2.62 4.02 L2.21 4.93 L1.99 5.88 L1.95 6.84 L2.09 7.78 L2.40 8.66 L2.86 9.45 L3.45 10.13 L4.15 10.67 L4.93 11.07 L5.75 11.31 L6.59 11.38 L7.41 11.30 L8.18 11.07 L8.89 10.71 L9.50 10.22 L10.00 9.64 L10.37 8.99 L10.61 8.30 L10.70 7.59 L10.67 6.88 L10.50 6.22 L10.22 5.61 L9.83 5.08 L9.36 4.64 L8.83 4.30 L8.26 4.08 L7.68 3.98 L7.09 3.99 L6.54 4.10 L6.03 4.32 L5.59 4.62 L5.22 4.98 L4.94 5.40 L4.75 5.85 L4.65 6.32 L4.65 6.78 L4.73 7.21 L4.89 7.61 L5.11 7.96 L5.39 8.25 L5.71 8.47 L6.05 8.61 L6.39 8.68 L6.73 8.69 L7.05 8.63 L7.34 8.51 L7.58 8.34 L7.78 8.14 L7.92 7.92" fill="none" stroke="#c8c8c8" stroke-width="1.15" stroke-linecap="round"/></svg>
<div style="left:1202.8px;top:880px;width:1.4px;height:199px;background:#1a1a1a;"></div>
<div style="left:1204px;top:934px;width:704px;height:145px;background:#333333;"></div>
<div style="left:1204px;top:880.5px;width:704px;height:13px;background:#1f1f1f;border-radius:6px 6px 0 0;"></div>
<div style="left:1210.5px;top:881.5px;width:691.5px;height:11px;background:#3d3d39;"></div>
<div style="left:1379px;top:881.5px;width:200.5px;height:11px;background:#6e6e6e;"></div>
<div style="left:1371.5px;top:881.5px;width:7.5px;height:11px;background:#3d8ee8;border-radius:4px 0 0 4px;"></div>
<div style="left:1579.5px;top:881.5px;width:7.5px;height:11px;background:#3d8ee8;border-radius:0 4px 4px 0;"></div>
<div style="left:1488px;top:883px;width:1.4px;height:8.5px;background:#3d8ee8;"></div>
<span style="left:1254.65px;top:894.89px;font-size:11.15px;line-height:13px;color:#c0c0c0;letter-spacing:-0.001px;">10f</span>
<div style="left:1261.9px;top:908.5px;width:1.2px;height:5.5px;background:#b0b0b0;"></div>
<span style="left:1344.85px;top:894.89px;font-size:11.15px;line-height:13px;color:#c0c0c0;letter-spacing:-0.001px;">20f</span>
<div style="left:1352.1px;top:908.5px;width:1.2px;height:5.5px;background:#b0b0b0;"></div>
<span style="left:1427.25px;top:894.89px;font-size:11.15px;line-height:13px;color:#c0c0c0;letter-spacing:0.083px;">03:00f</span>
<div style="left:1442.5px;top:906px;width:1.2px;height:8px;background:#b0b0b0;"></div>
<span style="left:1525.25px;top:894.89px;font-size:11.15px;line-height:13px;color:#c0c0c0;letter-spacing:-0.001px;">10f</span>
<div style="left:1532.5px;top:908.5px;width:1.2px;height:5.5px;background:#b0b0b0;"></div>
<span style="left:1615.75px;top:894.89px;font-size:11.15px;line-height:13px;color:#c0c0c0;letter-spacing:-0.001px;">20f</span>
<div style="left:1623.0px;top:908.5px;width:1.2px;height:5.5px;background:#b0b0b0;"></div>
<span style="left:1698.25px;top:894.89px;font-size:11.15px;line-height:13px;color:#c0c0c0;letter-spacing:0.083px;">04:00f</span>
<div style="left:1713.5px;top:906px;width:1.2px;height:8px;background:#b0b0b0;"></div>
<span style="left:1796.25px;top:894.89px;font-size:11.15px;line-height:13px;color:#c0c0c0;letter-spacing:-0.001px;">10f</span>
<div style="left:1803.5px;top:908.5px;width:1.2px;height:5.5px;background:#b0b0b0;"></div>
<span style="left:1886.75px;top:894.89px;font-size:11.15px;line-height:13px;color:#c0c0c0;letter-spacing:-0.001px;">20f</span>
<div style="left:1894.0px;top:908.5px;width:1.2px;height:5.5px;background:#b0b0b0;"></div>
<div style="left:1204px;top:915px;width:704px;height:17px;background:#676767;"></div>
<div style="left:1204px;top:932px;width:704px;height:2px;background:#1a1a1a;"></div>
<div style="left:1204px;top:945px;width:704px;height:1.4px;background:#262626;"></div>
<div style="left:1204px;top:964px;width:704px;height:1.4px;background:#262626;"></div>
<div style="left:1204px;top:983px;width:704px;height:1.4px;background:#262626;"></div>
<div style="left:1204px;top:1002px;width:704px;height:1.4px;background:#262626;"></div>
<div style="left:1204px;top:1021px;width:704px;height:1.4px;background:#262626;"></div>
<div style="left:1204px;top:1040px;width:704px;height:1.4px;background:#262626;"></div>
<div style="left:1204px;top:1059px;width:704px;height:1.4px;background:#262626;"></div>
<div style="left:1204px;top:1078px;width:704px;height:1.4px;background:#262626;"></div>
<div style="left:1204px;top:984px;width:704px;height:18px;background:#555e9a;"></div>
<svg style="left:0px;top:0px;" width="1920" height="1088" viewBox="0 0 1920 1088"><circle cx="1253.6" cy="955.6" r="3.2" fill="#c4c4c4"/><circle cx="1414.6" cy="955.6" r="3.2" fill="#c4c4c4"/><circle cx="1533.2" cy="955.6" r="3.2" fill="#c4c4c4"/><circle cx="1641" cy="955.6" r="3.2" fill="#c4c4c4"/><circle cx="1759.8" cy="955.6" r="3.2" fill="#c4c4c4"/><clipPath id="kc"><rect x="1204" y="935.4" width="704" height="12"/></clipPath><g clip-path="url(#kc)"><circle cx="1253.6" cy="936.7" r="3.2" fill="#c4c4c4"/><circle cx="1414.6" cy="936.7" r="3.2" fill="#c4c4c4"/><circle cx="1533.2" cy="936.7" r="3.2" fill="#c4c4c4"/><circle cx="1632" cy="936.7" r="3.2" fill="#c4c4c4"/><circle cx="1641" cy="936.7" r="3.2" fill="#c4c4c4"/><circle cx="1686" cy="936.7" r="3.2" fill="#c4c4c4"/><circle cx="1759.8" cy="936.7" r="3.2" fill="#c4c4c4"/></g><path d="M1584 949.5 H1591 M1584 962.5 H1591 M1585.8 949.5 V962.5 M1589.2 949.5 V962.5" fill="none" stroke="#b8b8b8" stroke-width="1"/><path d="M1584 968.5 H1591 M1584 981.5 H1591 M1585.8 968.5 V981.5 M1589.2 968.5 V981.5" fill="none" stroke="#b8b8b8" stroke-width="1"/><path d="M1584 1006.5 H1591 M1584 1019.5 H1591 M1585.8 1006.5 V1019.5 M1589.2 1006.5 V1019.5" fill="none" stroke="#b8b8b8" stroke-width="1"/><path d="M1584 1025.5 H1591 M1584 1038.5 H1591 M1585.8 1025.5 V1038.5 M1589.2 1025.5 V1038.5" fill="none" stroke="#b8b8b8" stroke-width="1"/><path d="M1584 1044.5 H1591 M1584 1057.5 H1591 M1585.8 1044.5 V1057.5 M1589.2 1044.5 V1057.5" fill="none" stroke="#b8b8b8" stroke-width="1"/><path d="M1584 1063.5 H1591 M1584 1076.5 H1591 M1585.8 1063.5 V1076.5 M1589.2 1063.5 V1076.5" fill="none" stroke="#b8b8b8" stroke-width="1"/><path d="M1584 936 H1591 M1584 943 H1591 M1585.8 936 V943 M1589.2 936 V943" fill="none" stroke="#b8b8b8" stroke-width="1"/></svg>
<div style="left:1588px;top:933px;width:9px;height:2.5px;background:#5d7a3a;"></div>
<div style="left:1586.8px;top:905px;width:1.4px;height:174px;background:#3d8ee8;"></div>
<svg style="left:1581px;top:898px;" width="13" height="14" viewBox="0 0 13 14"><path d="M.5 1.5 Q.5 .5 1.5 .5 H11.5 Q12.5 .5 12.5 1.5 V7.5 L6.5 13.5 L.5 7.5Z" fill="#3d8ee8"/><path d="M6.5 8 V13" stroke="#1a3f70" stroke-width="1"/></svg>
<div style="left:1908px;top:847px;width:12px;height:241px;background:#272727;"></div>
<svg style="left:1912.5px;top:917px;" width="8" height="15" viewBox="0 0 8 15"><path d="M0 0 H8 V15 L0 9Z" fill="#c8c8c8"/></svg>
<svg style="left:1906px;top:940px;" width="14" height="17" viewBox="0 0 14 17"><path d="M10 0 L1 12 H8 M4 9 L9 13" fill="none" stroke="#c8c8c8" stroke-width="1.4"/><circle cx="10" cy="13" r="3.2" fill="none" stroke="#c8c8c8" stroke-width="1.3"/></svg>
<div style="left:1910px;top:1028.5px;width:10px;height:26.5px;background:#363636;border-radius:7px 0 0 7px;"></div>
<div style="left:0px;top:1078.5px;width:1920px;height:1.5px;background:#161616;"></div>
<div style="left:0px;top:1080px;width:1920px;height:8px;background:#252525;"></div>
<div style="left:1324px;top:1080px;width:596px;height:8px;background:#1e1e1e;"></div>
<div style="left:1468px;top:1081px;width:167px;height:14px;background:#2d2d2d;border-radius:7px;"></div>
<div style="left:0;top:1080px;width:1324px;height:8px;overflow:hidden;">
<span style="left:113px;top:2.26px;font-size:12.12px;line-height:15px;color:#c0c0c0;letter-spacing:-0.018px;">Frame Render Time  0ms</span>
<svg style="left:4px;top:3px;" width="14" height="10" viewBox="0 0 14 10"><rect x=".7" y=".7" width="8" height="8" fill="none" stroke="#4c9cf0" stroke-width="1.3"/><rect x="4" y="3" width="8" height="8" fill="none" stroke="#4c9cf0" stroke-width="1.3"/></svg>
<svg style="left:25px;top:3px;" width="14" height="10" viewBox="0 0 14 10"><path d="M1 8 A6 6 0 0 1 13 8" fill="none" stroke="#4c9cf0" stroke-width="1.4"/></svg>
<svg style="left:46px;top:0px;" width="12" height="10" viewBox="0 0 12 10"><path d="M3 0 H9 V6 L11 9 H1 L3 6Z" fill="#c8c8c8"/></svg>
<svg style="left:68px;top:2.5px;" width="14" height="8" viewBox="0 0 14 8"><circle cx="4.5" cy="5" r="4" fill="#c8c8c8"/><path d="M10 3 v5 M12.5 3.5 v4" stroke="#c8c8c8" stroke-width="1.4"/></svg>
<svg style="left:1214px;top:5px;" width="8" height="5" viewBox="0 0 8 5"><path d="M0 5 L4 1 L8 5" fill="#c8c8c8"/></svg>
<svg style="left:1268px;top:3.5px;" width="12" height="8" viewBox="0 0 12 8"><circle cx="6" cy="6" r="4.6" fill="none" stroke="#c8c8c8" stroke-width="1.3"/></svg>
<svg style="left:1300px;top:3px;" width="12" height="8" viewBox="0 0 12 8"><path d="M1 7 L6 2 L11 7 M7 1 L10 4" fill="none" stroke="#c8c8c8" stroke-width="1.3"/></svg>
</div>
</div></body></html>
